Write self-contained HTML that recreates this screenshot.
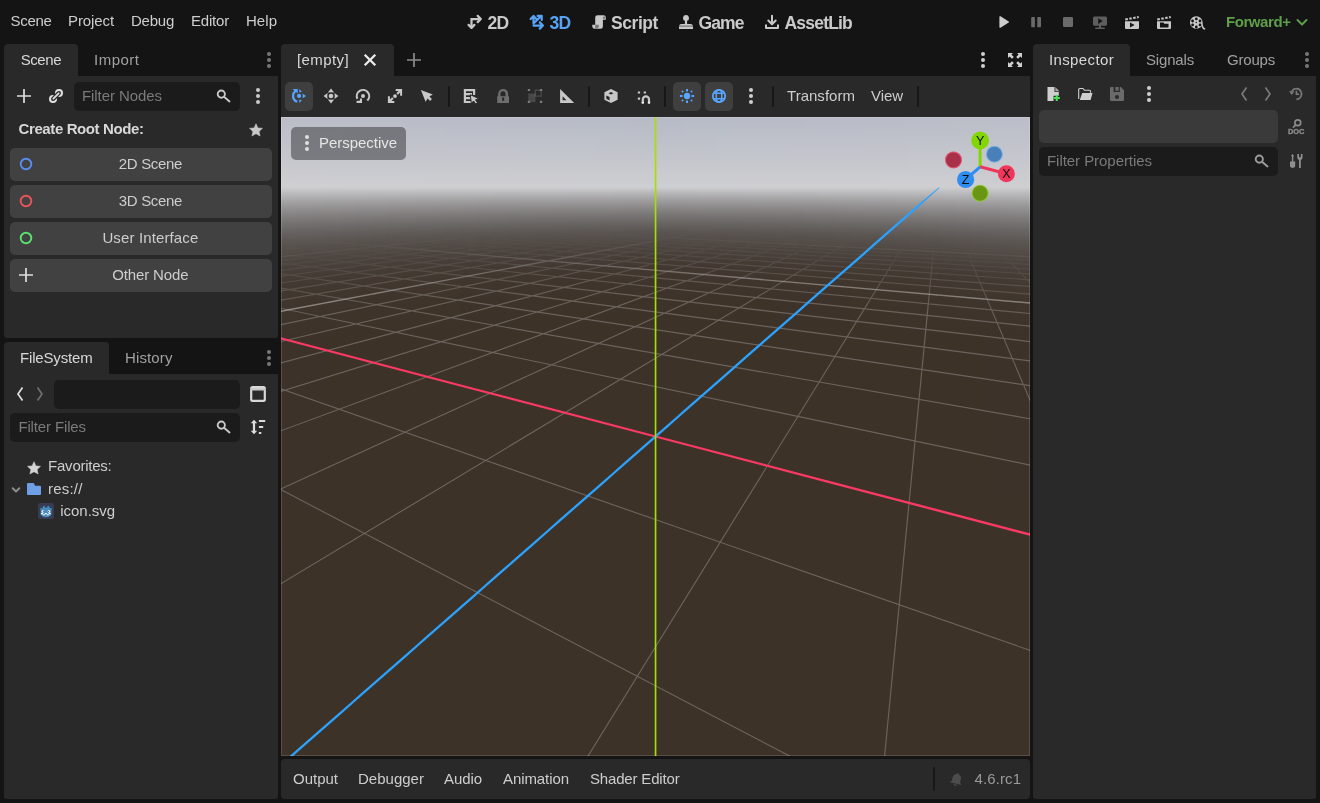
<!DOCTYPE html>
<html><head><meta charset="utf-8"><title>Godot Engine</title>
<style>
*{box-sizing:border-box;margin:0;padding:0}
html,body{width:1320px;height:803px;overflow:hidden;background:#141414}
body{position:relative;font-family:"Liberation Sans",sans-serif;font-size:15px;color:#d2d2d2}
.a{position:absolute}
.t{position:absolute;white-space:nowrap;line-height:20px;height:20px;font-size:15px;color:#cdcdcd}
.b{font-weight:bold}
.dim{color:#a0a0a0}
.ph{color:#7a7a7a}
.hl{color:#d8d8d8}
.ms{font-weight:bold;font-size:17.5px;color:#cacaca}
.ic{position:absolute;overflow:visible;color:#c8c8c8}
.panel{position:absolute;background:#292929}
.tab{position:absolute;background:#292929;border-radius:4px 4px 0 0}
.inp{position:absolute;background:#1b1b1b;border-radius:5px}
.btn{position:absolute;background:#414141;border-radius:5px}
.sep{position:absolute;width:2px;height:21px;background:#171717;border-radius:1px}
.vp{position:absolute;left:281px;top:117px;width:749px;height:639px;overflow:hidden;background:linear-gradient(to bottom,#b7bbc6 0.00%,#babdc7 1.56%,#bdc0c9 3.13%,#c0c2ca 4.69%,#c3c5cc 6.26%,#c7c8ce 7.82%,#cbccd0 9.39%,#cfcfd2 10.95%,#c8c8ca 11.27%,#bcbcbe 11.74%,#b1b0b2 12.21%,#a7a6a7 12.68%,#9d9c9d 13.15%,#949393 13.62%,#8c8a8a 14.08%,#848282 14.55%,#7d7a7a 15.02%,#777372 15.49%,#706d6b 15.96%,#6b6765 16.43%,#66615f 16.90%,#615c59 17.37%,#5d5754 17.84%,#59534f 18.31%,#554f4b 18.78%,#524b47 19.25%,#4f4843 19.72%,#4d4540 20.19%,#4b433d 20.66%,#49403a 21.13%,#473e38 21.60%,#463d36 22.07%,#41382f 23.94%,#3e342a 27.07%,#3d3228 100.00%)}
.vp3d{position:absolute;left:0;top:0}
.vpb{position:absolute;left:0;top:0;right:0;bottom:0;border:1px solid rgba(255,255,255,.14)}
.giz{position:absolute}
</style></head><body><div id="root" style="position:absolute;left:0;top:0;width:1320px;height:803px;will-change:transform">

<!-- top menu -->
<span class="t " style="letter-spacing:-0.31px;left:10.5px;top:10.7px;">Scene</span><span class="t " style="letter-spacing:-0.10px;left:68px;top:10.7px;">Project</span><span class="t " style="letter-spacing:-0.24px;left:131px;top:10.7px;">Debug</span><span class="t " style="letter-spacing:-0.20px;left:191px;top:10.7px;">Editor</span><span class="t " style="letter-spacing:0.04px;left:246px;top:10.7px;">Help</span>

<!-- main screen buttons -->
<svg class="ic" style="left:466.5px;top:14.0px;width:16px;height:16px;color:#c8c8c8;" viewBox="0 0 16 16" ><path fill="none" stroke="currentColor" stroke-width="2.250" stroke-linejoin="miter" d="M4.500 13.500V5h9"/><path fill="none" stroke="currentColor" stroke-width="2.250" stroke-linecap="round" stroke-linejoin="round" d="M10.700 1.900L13.800 5l-3.100 3.100M1.600 10.900l2.900 3 2.900-3"/></svg><span class="t ms" style="letter-spacing:-0.69px;left:487.5px;top:12.600000000000001px;">2D</span>
<svg class="ic" style="left:529.0px;top:14.0px;width:16px;height:16px;color:#57a3f5;" viewBox="0 0 16 16" ><path fill="none" stroke="currentColor" stroke-width="2.250" stroke-linecap="round" stroke-linejoin="round" d="M4.500 2.200v7.300l7.500-7.300M4.500 11.500h9.300M1.600 5l2.900-3 2.900 3M10.800 8.400l3.100 3.100-3.100 3.100M8.700 1.900h4v4"/></svg><span class="t ms" style="letter-spacing:-0.69px;left:549.5px;top:12.600000000000001px;color:#57a3f5">3D</span>
<svg class="ic" style="left:591.0px;top:14.0px;width:16px;height:16px;color:#c8c8c8;" viewBox="0 0 16 16" ><path fill="currentColor" d="M6.500 1.200a2.300 2.300 0 0 0-2.300 2.300v7.300H1.300v1.700a2.300 2.300 0 0 0 2.300 2.300h6a2.300 2.300 0 0 0 2.300-2.300V5.700h2.900V3.500a2.300 2.300 0 0 0-2.300-2.300z"/><path fill="#141414" opacity=".45" d="M4.200 10.800h3.600v1.700a1.700 1.700 0 0 1-1.700 1.700H3.600a1.700 1.700 0 0 0 .6-1.700zM11.900 3.500a1.100 1.100 0 0 1 2.200 0v1.300h-2.200z"/></svg><span class="t ms" style="letter-spacing:-0.43px;left:611px;top:12.600000000000001px;">Script</span>
<svg class="ic" style="left:678.0px;top:14.0px;width:16px;height:16px;color:#c8c8c8;" viewBox="0 0 16 16" ><path fill="currentColor" d="M8 1a3 3 0 0 0-1.100 5.800V10H3.500A2.500 2.500 0 0 0 1 12.500V15h14v-2.500A2.500 2.500 0 0 0 12.500 10H9.100V6.800A3 3 0 0 0 8 1z"/><path fill="#141414" d="M1 11.700h14v.8H1z" opacity=".7"/></svg><span class="t ms" style="letter-spacing:-0.91px;left:698.5px;top:12.600000000000001px;">Game</span>
<svg class="ic" style="left:764.0px;top:14.0px;width:16px;height:16px;color:#c8c8c8;" viewBox="0 0 16 16" ><path fill="none" stroke="currentColor" stroke-width="2" stroke-linecap="round" stroke-linejoin="round" d="M8 1.800v8M4.300 6.500L8 10.200l3.700-3.700"/><path fill="none" stroke="currentColor" stroke-width="2" stroke-linejoin="round" d="M2 10.500V14h12v-3.500"/></svg><span class="t ms" style="letter-spacing:-0.80px;left:784.5px;top:12.600000000000001px;">AssetLib</span>

<!-- run bar -->
<svg class="ic" style="left:995.5px;top:14.0px;width:16px;height:16px;color:#cdcdcd;" viewBox="0 0 16 16" ><path fill="currentColor" d="M3.400 2.900v10.200a.7.700 0 0 0 1.100.6l8.200-5.100a.7.700 0 0 0 0-1.200L4.500 2.300a.7.700 0 0 0-1.100.6z"/></svg><svg class="ic" style="left:1028.0px;top:14.0px;width:16px;height:16px;color:#6a6a6a;" viewBox="0 0 16 16" ><rect x="3.200" y="2.900" width="3.700" height="10.400" rx=".9" fill="currentColor"/><rect x="9.300" y="2.900" width="3.700" height="10.400" rx=".9" fill="currentColor"/></svg><svg class="ic" style="left:1060.0px;top:14.0px;width:16px;height:16px;color:#6a6a6a;" viewBox="0 0 16 16" ><rect x="3" y="3" width="10" height="10" rx="1.300" fill="currentColor"/></svg>
<svg class="ic" style="left:1092.0px;top:14.5px;width:16px;height:16px;color:#5e5e5e;" viewBox="0 0 16 16" ><path fill="currentColor" fill-rule="evenodd" d="M2.500 1.400a1.500 1.500 0 0 0-1.500 1.500v6.400a1.500 1.500 0 0 0 1.500 1.500h4.500v1.600H3.200v1.700h9.600v-1.700H9v-1.600h4.500a1.500 1.500 0 0 0 1.500-1.500V2.900a1.500 1.500 0 0 0-1.500-1.500zM6.200 3.300l4.600 2.800-4.600 2.800z"/></svg><svg class="ic" style="left:1124.0px;top:14.3px;width:16px;height:16px;color:#c8c8c8;" viewBox="0 0 16 16" ><path fill="currentColor" d="M1 4.400L14.500 1.900l.5 2.200L1.500 6.600z"/><path fill="#141414" d="M3.500 3.600l1.500-.300.600 2.600-1.500.300zM7.400 2.900l1.500-.300.600 2.600-1.500.300zM11.300 2.200l1.500-.300.600 2.600-1.500.300z"/><path fill="currentColor" fill-rule="evenodd" d="M1 7.200h14v6.800a1 1 0 0 1-1 1H2a1 1 0 0 1-1-1zm5 1.300v5l4.600-2.500z"/></svg><svg class="ic" style="left:1156.0px;top:14.3px;width:16px;height:16px;color:#c8c8c8;" viewBox="0 0 16 16" ><path fill="currentColor" d="M1 4.400L14.500 1.900l.5 2.200L1.500 6.600z"/><path fill="#141414" d="M3.500 3.600l1.500-.300.600 2.600-1.500.300zM7.400 2.900l1.500-.300.600 2.600-1.500.300zM11.300 2.200l1.500-.300.600 2.600-1.500.300z"/><path fill="currentColor" fill-rule="evenodd" d="M1 7.200h14v6.800a1 1 0 0 1-1 1H2a1 1 0 0 1-1-1zm3 1.400v4.900h8.500V9.800H8.400l-1-1.200z"/></svg><svg class="ic" style="left:1189.0px;top:14.6px;width:16px;height:16px;color:#c8c8c8;" viewBox="0 0 16 16" ><path fill="currentColor" fill-rule="evenodd" d="M7.300 1.200a6.300 6.300 0 1 0 5.300 9.700c.3 1.500.9 2.700 2 3.300a.9.900 0 1 0 .6-1.300c-1-.9-1.500-2.800-1.600-5.400A6.300 6.300 0 0 0 7.300 1.200zm0 1.300a1.400 1.400 0 1 1 0 2.800 1.400 1.400 0 0 1 0-2.800zM3.600 4.600a1.400 1.400 0 1 1 0 2.800 1.400 1.400 0 0 1 0-2.800zm7.400 0a1.400 1.400 0 1 1 0 2.800 1.400 1.400 0 0 1 0-2.800zM7.300 6.700a.8.800 0 1 1 0 1.600.8.800 0 0 1 0-1.600zM3.600 8.500a1.400 1.400 0 1 1 0 2.800 1.400 1.400 0 0 1 0-2.800zm7.400 0a1.400 1.400 0 1 1 0 2.800 1.400 1.400 0 0 1 0-2.800zM7.300 10.600a1.400 1.400 0 1 1 0 2.800 1.400 1.400 0 0 1 0-2.800z"/></svg>
<span class="t b" style="letter-spacing:-0.43px;left:1226px;top:11.8px;font-size:15px;color:#5f9f4a">Forward+</span>
<svg class="ic" style="left:1294.0px;top:14.0px;width:16px;height:16px;color:#5f9f4a;" viewBox="0 0 16 16" ><path fill="none" stroke="currentColor" stroke-width="2" stroke-linecap="round" stroke-linejoin="round" d="M3.500 6l4.500 4.500L12.500 6"/></svg>

<!-- Scene dock -->
<div class="tab" style="left:4px;top:44px;width:74px;height:33px"></div>
<div class="panel" style="left:4px;top:76px;width:274px;height:262px;border-radius:0 0 3px 3px"></div>
<span class="t hl" style="letter-spacing:-0.41px;left:20.7px;top:49.6px;">Scene</span><span class="t dim" style="letter-spacing:0.50px;left:94px;top:49.6px;">Import</span>
<svg class="ic" style="left:260.9px;top:52.0px;width:16px;height:16px;color:#787878;" viewBox="0 0 16 16" ><circle cx="8" cy="2" r="2.05" fill="currentColor"/><circle cx="8" cy="8" r="2.05" fill="currentColor"/><circle cx="8" cy="14" r="2.05" fill="currentColor"/></svg>
<svg class="ic" style="left:16.0px;top:88.0px;width:16px;height:16px;color:#e0e0e0;" viewBox="0 0 16 16" ><path fill="currentColor" d="M7.150 1v6.150H1v1.700h6.150V15h1.700V8.850H15v-1.700H8.850V1z"/></svg><svg class="ic" style="left:48.0px;top:88.0px;width:16px;height:16px;color:#e0e0e0;" viewBox="0 0 16 16" ><g fill="none" stroke="currentColor" stroke-width="2"><circle cx="11" cy="5" r="3"/><circle cx="5" cy="11" r="3"/></g><path fill="none" stroke="#292929" stroke-width="4.300" stroke-linecap="round" d="M5.800 10.200L10.200 5.800"/><path fill="none" stroke="currentColor" stroke-width="1.900" stroke-linecap="round" d="M5.300 10.700L10.700 5.300"/></svg>
<div class="inp" style="left:74px;top:82px;width:166px;height:29px"></div>
<span class="t ph" style="letter-spacing:-0.07px;left:82px;top:86px;">Filter Nodes</span><svg class="ic" style="left:216.0px;top:88.0px;width:16px;height:16px;color:#c8c8c8;" viewBox="0 0 16 16" ><circle cx="5.300" cy="6.100" r="3.600" fill="none" stroke="currentColor" stroke-width="1.900"/><path fill="none" stroke="currentColor" stroke-width="1.900" stroke-linecap="round" d="M8.300 9l5.200 4.500"/></svg>
<svg class="ic" style="left:250.0px;top:88.0px;width:16px;height:16px;color:#cacaca;" viewBox="0 0 16 16" ><circle cx="8" cy="2" r="2.05" fill="currentColor"/><circle cx="8" cy="8" r="2.05" fill="currentColor"/><circle cx="8" cy="14" r="2.05" fill="currentColor"/></svg>
<span class="t b hl" style="letter-spacing:-0.39px;left:18.5px;top:118.80000000000001px;">Create Root Node:</span><svg class="ic" style="left:248.0px;top:121.6px;width:16px;height:16px;color:#c8c8c8;" viewBox="0 0 16 16" ><path fill="currentColor" stroke="currentColor" stroke-width=".5" stroke-linejoin="round" d="M8 1.700l1.900 4.200 4.600.4-3.400 3.200 1 4.500L8 11.700l-4.100 2.300 1-4.500L1.500 6.300l4.600-.4z"/></svg>
<div class="btn" style="left:10px;top:148px;width:262px;height:33px"></div>
<div class="btn" style="left:10px;top:185px;width:262px;height:33px"></div>
<div class="btn" style="left:10px;top:222px;width:262px;height:33px"></div>
<div class="btn" style="left:10px;top:259px;width:262px;height:33px"></div>
<svg class="ic" style="left:18.0px;top:156.3px;width:16px;height:16px;color:#5b8cf0;" viewBox="0 0 16 16" ><circle cx="8" cy="8" r="5.300" fill="none" stroke="currentColor" stroke-width="1.900"/></svg><svg class="ic" style="left:18.0px;top:193.2px;width:16px;height:16px;color:#e8545a;" viewBox="0 0 16 16" ><circle cx="8" cy="8" r="5.300" fill="none" stroke="currentColor" stroke-width="1.900"/></svg><svg class="ic" style="left:18.0px;top:230.2px;width:16px;height:16px;color:#5ae070;" viewBox="0 0 16 16" ><circle cx="8" cy="8" r="5.300" fill="none" stroke="currentColor" stroke-width="1.900"/></svg><svg class="ic" style="left:18.2px;top:267.0px;width:16px;height:16px;color:#e0e0e0;" viewBox="0 0 16 16" ><path fill="currentColor" d="M7.150 1v6.150H1v1.700h6.150V15h1.700V8.850H15v-1.700H8.850V1z"/></svg>
<span class="t " style="letter-spacing:-0.30px;left:118.7px;top:154.3px;">2D Scene</span><span class="t " style="letter-spacing:-0.30px;left:118.7px;top:191.2px;">3D Scene</span><span class="t " style="letter-spacing:0.13px;left:102.4px;top:228.2px;">User Interface</span><span class="t " style="letter-spacing:-0.15px;left:112.3px;top:265.1px;">Other Node</span>

<!-- FileSystem dock -->
<div class="tab" style="left:4px;top:342px;width:105px;height:33px"></div>
<div class="panel" style="left:4px;top:374px;width:274px;height:425px;border-radius:0 0 3px 3px"></div>
<span class="t hl" style="letter-spacing:-0.17px;left:20px;top:347.6px;">FileSystem</span><span class="t dim" style="letter-spacing:0.12px;left:125px;top:347.6px;">History</span>
<svg class="ic" style="left:260.9px;top:350.0px;width:16px;height:16px;color:#787878;" viewBox="0 0 16 16" ><circle cx="8" cy="2" r="2.05" fill="currentColor"/><circle cx="8" cy="8" r="2.05" fill="currentColor"/><circle cx="8" cy="14" r="2.05" fill="currentColor"/></svg>
<svg class="ic" style="left:12.0px;top:386.0px;width:16px;height:16px;color:#e0e0e0;" viewBox="0 0 16 16" ><path fill="none" stroke="currentColor" stroke-width="1.700" d="M10.500 1.500L6 8l4.500 6.500"/></svg><svg class="ic" style="left:32.0px;top:386.0px;width:16px;height:16px;color:#707070;" viewBox="0 0 16 16" ><path fill="none" stroke="currentColor" stroke-width="1.700" d="M5.500 1.500L10 8l-4.500 6.500"/></svg>
<div class="inp" style="left:54px;top:380px;width:186px;height:29px"></div>
<svg class="ic" style="left:250.1px;top:386.0px;width:16px;height:16px;color:#d8d8d8;" viewBox="0 0 16 16" ><path fill="currentColor" fill-rule="evenodd" d="M2.600 .1A2.500 2.500 0 0 0 .1 2.600v10.800a2.500 2.500 0 0 0 2.500 2.500h10.800a2.500 2.500 0 0 0 2.500-2.500V2.600A2.500 2.500 0 0 0 13.400 .1zM2.300 4.400h11.400v9.300H2.300z"/><path fill="#292929" opacity=".1" d="M.1 2.600h15.800v1.800H.1z"/></svg>
<div class="inp" style="left:10px;top:413px;width:230px;height:29px"></div>
<span class="t ph" style="letter-spacing:-0.14px;left:18.4px;top:416.6px;">Filter Files</span><svg class="ic" style="left:216.0px;top:419.0px;width:16px;height:16px;color:#c8c8c8;" viewBox="0 0 16 16" ><circle cx="5.300" cy="6.100" r="3.600" fill="none" stroke="currentColor" stroke-width="1.900"/><path fill="none" stroke="currentColor" stroke-width="1.900" stroke-linecap="round" d="M8.300 9l5.200 4.500"/></svg><svg class="ic" style="left:250.0px;top:419.0px;width:16px;height:16px;color:#dcdcdc;" viewBox="0 0 16 16" ><path fill="currentColor" d="M4 .7L.8 4.300h2.100v7.400H.8L4 15.300l3.200-3.600H5.100V4.300h2.100zM8.900 1h6.300v2.100H8.900zM8.900 7h4.300v2.100H8.900zM8.900 13h2.400v2.100H8.900z"/></svg>
<svg class="ic" style="left:26.0px;top:459.6px;width:16px;height:16px;color:#d4d4d4;" viewBox="0 0 16 16" ><path fill="currentColor" stroke="currentColor" stroke-width=".5" stroke-linejoin="round" d="M8 1.700l1.900 4.200 4.600.4-3.400 3.200 1 4.500L8 11.700l-4.100 2.300 1-4.500L1.500 6.300l4.600-.4z"/></svg><span class="t " style="letter-spacing:-0.24px;left:48.1px;top:456.4px;">Favorites:</span>
<svg class="ic" style="left:8.0px;top:481.5px;width:16px;height:16px;color:#8c8c8c;" viewBox="0 0 16 16" ><path fill="none" stroke="currentColor" stroke-width="2" stroke-linecap="round" stroke-linejoin="round" d="M4.700 6.200L8 9.500l3.300-3.300"/></svg><svg class="ic" style="left:26.0px;top:481.0px;width:16px;height:16px;color:#6e9ee4;" viewBox="0 0 16 16" ><path fill="currentColor" d="M2 2a1 1 0 0 0-1 1v10a1 1 0 0 0 1 1h12a1 1 0 0 0 1-1V5.700a1 1 0 0 0-1-1H9L8.200 2.700A1 1 0 0 0 7.300 2z"/></svg><span class="t " style="letter-spacing:0.19px;left:48.1px;top:478.8px;">res://</span>
<svg class="ic" style="left:38.0px;top:503.0px;width:16px;height:16px;" viewBox="0 0 16 16" ><rect x="0" y="0" width="16" height="16" rx="2.600" fill="#363d52"/><path fill="#478cbf" d="M1.900 5.500l.7 1.500v4.500l1.400 1.500 2 1 2 .2 2-.2 2-1 1.400-1.500V7l.7-1.500-1.300-.6-.9.900-.5-2.300-1.600-.8-.6 1.800H7l-.6-1.800-1.600.8-.5 2.300-.9-.9z"/><circle cx="4.800" cy="8.400" r="1.250" fill="#fff"/><circle cx="10.900" cy="8.400" r="1.250" fill="#fff"/><circle cx="5.300" cy="8.500" r=".6" fill="#414042"/><circle cx="10.400" cy="8.500" r=".6" fill="#414042"/><path fill="#fff" d="M2.900 10.100h1.900v1.100H2.900zM6.800 10.100h2v1.100h-2zM10.800 10.100h1.900v1.100h-1.900zM4.800 11.200h2v1.100h-2zM8.800 11.200h2v1.100h-2z"/></svg><span class="t " style="letter-spacing:-0.00px;left:60.2px;top:501.1px;">icon.svg</span>

<!-- center -->
<div class="tab" style="left:281px;top:44px;width:113px;height:33px"></div>
<div class="panel" style="left:281px;top:76px;width:749px;height:42px"></div>
<span class="t hl" style="letter-spacing:0.40px;left:297px;top:49.6px;">[empty]</span><svg class="ic" style="left:362.0px;top:52.0px;width:16px;height:16px;color:#ececec;" viewBox="0 0 16 16" ><path fill="none" stroke="currentColor" stroke-width="2.300" d="M2.700 2.700l10.600 10.600M13.300 2.700L2.700 13.300"/></svg><svg class="ic" style="left:406.0px;top:52.0px;width:16px;height:16px;color:#8c8c8c;" viewBox="0 0 16 16" ><path fill="currentColor" d="M7.150 1v6.150H1v1.700h6.150V15h1.700V8.850H15v-1.700H8.850V1z"/></svg>
<svg class="ic" style="left:975.0px;top:52.2px;width:16px;height:16px;color:#d0d0d0;" viewBox="0 0 16 16" ><circle cx="8" cy="2" r="2.05" fill="currentColor"/><circle cx="8" cy="8" r="2.05" fill="currentColor"/><circle cx="8" cy="14" r="2.05" fill="currentColor"/></svg><svg class="ic" style="left:1007.0px;top:52.0px;width:16px;height:16px;color:#d0d0d0;" viewBox="0 0 16 16" ><path fill="currentColor" d="M1 1h5L4.400 2.600l2.400 2.400-1.800 1.800-2.400-2.400L1 6zM15 1v5l-1.600-1.600-2.400 2.400-1.800-1.800 2.400-2.400L10 1zM1 15v-5l1.600 1.600 2.400-2.400 1.800 1.800-2.400 2.400L6 15zM15 15h-5l1.600-1.600-2.400-2.400 1.800-1.800 2.400 2.400L15 10z"/></svg>

<div class="btn" style="left:285px;top:82px;width:28px;height:29px;background:#3f3f3f"></div>
<svg class="ic" style="left:291.0px;top:88.0px;width:16px;height:16px;" viewBox="0 0 16 16" ><g fill="#57a5ff"><circle cx="8.100" cy="7.900" r="2.100"/><path d="M11.700 5.700L15.100 8l-3.400 2.300zM8.300 .9L11 4.100 8.300 4.300zM8.300 15.100L11 11.900 8.300 11.700z"/><path d="M1.700 1h5v4.600L5.300 4.200l-.2.200z"/></g><path fill="none" stroke="#57a5ff" stroke-width="2.200" d="M5.600 2.600A6 6 0 0 0 6.300 13.800"/></svg><svg class="ic" style="left:323.0px;top:88.0px;width:16px;height:16px;" viewBox="0 0 16 16" ><path fill="currentColor" d="M8 .6l3.100 3.900H4.900zM8 15.400l3.100-3.900H4.900zM.6 8l3.900-3.100v6.200zM15.400 8l-3.900-3.100v6.200z"/><circle cx="8" cy="8" r="3.500" fill="#292929"/><circle cx="8" cy="8" r="2.300" fill="currentColor"/></svg><svg class="ic" style="left:355.0px;top:88.0px;width:16px;height:16px;" viewBox="0 0 16 16" ><path fill="none" stroke="currentColor" stroke-width="2.100" d="M12.300 12.600A6.200 6.200 0 1 0 2.400 10.800"/><path fill="currentColor" d="M1.600 14.900h5.400v-4.500H4.900v2.400H1.600z"/><circle cx="8" cy="8.100" r="2" fill="currentColor"/></svg><svg class="ic" style="left:387.0px;top:88.0px;width:16px;height:16px;" viewBox="0 0 16 16" ><path fill="currentColor" d="M8.700 1.100h6.400v6.700h-2V4.600l-2.200 2.200-1.500-1.500 2.100-2.200H8.700zM7.300 14.900H.9V8.200h2v3.200l2.200-2.200 1.500 1.500-2.100 2.200h2.800z"/><circle cx="8" cy="8.100" r="1.900" fill="currentColor"/></svg><svg class="ic" style="left:419.0px;top:88.0px;width:16px;height:16px;" viewBox="0 0 16 16" ><path fill="currentColor" d="M1.900 2.100l11.900 4.500-3.400 2 2.500 2.500-1.800 1.800-2.500-2.500-2 3.400z"/></svg>
<div class="sep" style="left:448px;top:86px"></div>
<svg class="ic" style="left:463.0px;top:88.0px;width:16px;height:16px;" viewBox="0 0 16 16" ><path fill="currentColor" d="M.8 1h11.400v6H10V3.200H3v1.900h6v2.200H3v1.800h5v2.200H3V13h6v2.100H.8z"/><path fill="currentColor" stroke="#292929" stroke-width="1" d="M7.300 6.700l8.400 3.800-3.200 1.300 2 2.900-1.900 1.300-2-3-2.300 2.300z"/></svg><svg class="ic" style="left:495.0px;top:88.0px;width:16px;height:16px;color:#6e6e6e;" viewBox="0 0 16 16" ><path fill="currentColor" fill-rule="evenodd" d="M8 1a4.900 4.900 0 0 0-4.900 4.900v2.400H2.200v6.600h11.800V8.300h-.9V5.900A4.900 4.900 0 0 0 8 1zm0 2.300a2.600 2.600 0 0 1 2.600 2.600v2.400H5.400V5.900A2.600 2.600 0 0 1 8 3.300zM7.100 9.600h2.100v3.200H7.100z"/></svg><svg class="ic" style="left:527.0px;top:88.0px;width:16px;height:16px;color:#7c7c7c;" viewBox="0 0 16 16" ><path fill="currentColor" d="M.8 1h2.300v2.100H.8zM12.900 1h2.300v2.100h-2.300zM.8 12.800h2.300v2.100H.8zM12.900 12.800h2.300v2.100h-2.300z"/><path fill="currentColor" opacity=".38" d="M1.300 5.500h7.200v8.700H1.300z"/><path fill="none" stroke="currentColor" opacity=".38" stroke-width="1.400" d="M8.300 2.200h5.900v5.900H8.300z"/></svg><svg class="ic" style="left:559.0px;top:88.0px;width:16px;height:16px;" viewBox="0 0 16 16" ><path fill="currentColor" fill-rule="evenodd" d="M1.100 1v14.100h14.100zM3.600 8.300l3.900 3.900H3.600z"/></svg>
<div class="sep" style="left:588px;top:86px"></div>
<svg class="ic" style="left:603.0px;top:87.6px;width:16px;height:16px;" viewBox="0 0 16 16" ><path fill="currentColor" d="M8 .9L1.400 4.300v7.400L8 15.100l6.600-3.400V4.300z"/><path fill="#292929" d="M3.300 7.400l3.300 1.600v3.400l-3.300-1.600zM8 3.900l2.500 1.300L8 6.500 5.500 5.200z"/></svg><svg class="ic" style="left:636.0px;top:87.5px;width:16px;height:16px;" viewBox="0 0 16 16" ><path fill="currentColor" d="M1.800 3.400h2.300v2.200H1.800zM7.700 3.400H10v2.200H7.700zM1.800 9.500h2.300v2.200H1.800z"/><path fill="none" stroke="currentColor" stroke-width="2.200" d="M6.800 15.400v-4a3.100 3.100 0 0 1 6.200 0v4"/><path fill="#f4f4f4" d="M5.700 13.700h2.200v1.700H5.700zM11.900 13.700h2.200v1.700h-2.200z"/></svg>
<div class="sep" style="left:664px;top:86px"></div>
<div class="btn" style="left:673px;top:82px;width:28px;height:29px;background:#3f3f3f"></div>
<div class="btn" style="left:705px;top:82px;width:28px;height:29px;background:#3f3f3f"></div>
<svg class="ic" style="left:678.8px;top:88.0px;width:16px;height:16px;color:#57a5ff;" viewBox="0 0 16 16" ><circle cx="8" cy="8" r="3.200" fill="currentColor"/><path fill="currentColor" d="M7 .9h2v2.600H7zM7 12.500h2v2.600H7zM.9 7h2.600v2H.9zM12.500 7h2.600v2h-2.600zM3.500 2.300l1.200 1.200-1.200 1.200-1.200-1.200zM12.500 2.300l1.200 1.200-1.200 1.200-1.200-1.200zM3.500 11.300l1.200 1.200-1.200 1.200-1.200-1.200zM12.500 11.300l1.200 1.200-1.200 1.200-1.200-1.200z"/></svg><svg class="ic" style="left:711.0px;top:88.0px;width:16px;height:16px;color:#57a5ff;" viewBox="0 0 16 16" ><circle cx="8" cy="8" r="6.200" fill="none" stroke="currentColor" stroke-width="1.800"/><ellipse cx="8" cy="8" rx="2.800" ry="6.200" fill="none" stroke="currentColor" stroke-width="1.500"/><path fill="none" stroke="currentColor" stroke-width="1.500" d="M2.600 5.200h10.800M2.600 10.800h10.800"/></svg><svg class="ic" style="left:743.0px;top:88.0px;width:16px;height:16px;color:#d0d0d0;" viewBox="0 0 16 16" ><circle cx="8" cy="2" r="2.05" fill="currentColor"/><circle cx="8" cy="8" r="2.05" fill="currentColor"/><circle cx="8" cy="14" r="2.05" fill="currentColor"/></svg>
<div class="sep" style="left:772px;top:86px"></div>
<span class="t " style="letter-spacing:0.02px;left:787px;top:86px;">Transform</span><span class="t " style="letter-spacing:-0.06px;left:871px;top:86px;">View</span>
<div class="sep" style="left:917px;top:86px"></div>

<div class="vp"><svg class="vp3d" width="749" height="639" viewBox="0 0 749 639">
<defs><linearGradient id="sk0" x1="0" y1="0" x2="0" y2="1"><stop offset="0.0000" stop-color="#bbbec8"/><stop offset="0.0235" stop-color="#bec1ca"/><stop offset="0.0469" stop-color="#c2c4cc"/><stop offset="0.0704" stop-color="#c7c8ce"/><stop offset="0.0892" stop-color="#cbcbd0"/><stop offset="0.1017" stop-color="#cdced1"/><stop offset="0.1080" stop-color="#cfcfd2"/><stop offset="0.1111" stop-color="#cccccf"/><stop offset="0.1142" stop-color="#c6c6c8"/><stop offset="0.1189" stop-color="#bcbcbe"/><stop offset="0.1252" stop-color="#b1b0b2"/><stop offset="0.1315" stop-color="#a5a4a6"/><stop offset="0.1377" stop-color="#9b9a9b"/><stop offset="0.1440" stop-color="#929090"/><stop offset="0.1502" stop-color="#898787"/><stop offset="0.1565" stop-color="#817e7e"/><stop offset="0.1628" stop-color="#797675"/><stop offset="0.1690" stop-color="#736f6e"/><stop offset="0.1753" stop-color="#6c6867"/><stop offset="0.1815" stop-color="#676260"/><stop offset="0.1878" stop-color="#625d5a"/><stop offset="0.1941" stop-color="#5d5754"/><stop offset="0.2003" stop-color="#59534f"/><stop offset="0.2066" stop-color="#554f4b"/><stop offset="0.2144" stop-color="#514a45"/><stop offset="0.2238" stop-color="#4d4540"/><stop offset="0.2363" stop-color="#48403a"/><stop offset="0.2551" stop-color="#443b33"/><stop offset="0.2864" stop-color="#40362d"/><stop offset="0.3490" stop-color="#3d3229"/><stop offset="1.0000" stop-color="#3d3228"/></linearGradient><linearGradient id="sk1" x1="0" y1="0" x2="0" y2="1"><stop offset="0.0000" stop-color="#babec8"/><stop offset="0.0235" stop-color="#bec1ca"/><stop offset="0.0469" stop-color="#c2c4cc"/><stop offset="0.0704" stop-color="#c7c8ce"/><stop offset="0.0892" stop-color="#cbcbd0"/><stop offset="0.1017" stop-color="#cdcdd1"/><stop offset="0.1080" stop-color="#cfcfd2"/><stop offset="0.1111" stop-color="#cccccf"/><stop offset="0.1142" stop-color="#c6c5c8"/><stop offset="0.1189" stop-color="#bcbcbe"/><stop offset="0.1252" stop-color="#b0afb1"/><stop offset="0.1315" stop-color="#a5a4a5"/><stop offset="0.1377" stop-color="#9b999a"/><stop offset="0.1440" stop-color="#918f90"/><stop offset="0.1502" stop-color="#888686"/><stop offset="0.1565" stop-color="#807d7d"/><stop offset="0.1628" stop-color="#797574"/><stop offset="0.1690" stop-color="#726e6d"/><stop offset="0.1753" stop-color="#6b6766"/><stop offset="0.1815" stop-color="#66615f"/><stop offset="0.1878" stop-color="#615c59"/><stop offset="0.1941" stop-color="#5c5753"/><stop offset="0.2003" stop-color="#58524e"/><stop offset="0.2066" stop-color="#544e4a"/><stop offset="0.2144" stop-color="#504944"/><stop offset="0.2238" stop-color="#4c453f"/><stop offset="0.2363" stop-color="#484039"/><stop offset="0.2551" stop-color="#433a33"/><stop offset="0.2864" stop-color="#40352c"/><stop offset="0.3490" stop-color="#3d3229"/><stop offset="1.0000" stop-color="#3d3228"/></linearGradient><linearGradient id="sk2" x1="0" y1="0" x2="0" y2="1"><stop offset="0.0000" stop-color="#babdc8"/><stop offset="0.0235" stop-color="#bec1c9"/><stop offset="0.0469" stop-color="#c2c4cc"/><stop offset="0.0704" stop-color="#c7c8ce"/><stop offset="0.0892" stop-color="#cbcbd0"/><stop offset="0.1017" stop-color="#cdcdd1"/><stop offset="0.1080" stop-color="#cfcfd2"/><stop offset="0.1111" stop-color="#cccccf"/><stop offset="0.1142" stop-color="#c6c5c8"/><stop offset="0.1189" stop-color="#bcbbbe"/><stop offset="0.1252" stop-color="#b0afb1"/><stop offset="0.1315" stop-color="#a4a3a5"/><stop offset="0.1377" stop-color="#9a9899"/><stop offset="0.1440" stop-color="#908e8f"/><stop offset="0.1502" stop-color="#878585"/><stop offset="0.1565" stop-color="#7f7c7c"/><stop offset="0.1628" stop-color="#787474"/><stop offset="0.1690" stop-color="#716d6c"/><stop offset="0.1753" stop-color="#6b6665"/><stop offset="0.1815" stop-color="#65605e"/><stop offset="0.1878" stop-color="#605b58"/><stop offset="0.1941" stop-color="#5b5652"/><stop offset="0.2003" stop-color="#57514d"/><stop offset="0.2066" stop-color="#544d49"/><stop offset="0.2144" stop-color="#504844"/><stop offset="0.2238" stop-color="#4c443e"/><stop offset="0.2363" stop-color="#473f38"/><stop offset="0.2551" stop-color="#433a32"/><stop offset="0.2864" stop-color="#3f352c"/><stop offset="0.3490" stop-color="#3d3229"/><stop offset="1.0000" stop-color="#3d3228"/></linearGradient><linearGradient id="sk3" x1="0" y1="0" x2="0" y2="1"><stop offset="0.0000" stop-color="#babdc7"/><stop offset="0.0235" stop-color="#bec1c9"/><stop offset="0.0469" stop-color="#c2c4cb"/><stop offset="0.0704" stop-color="#c7c8ce"/><stop offset="0.0892" stop-color="#cacbd0"/><stop offset="0.1017" stop-color="#cdcdd1"/><stop offset="0.1080" stop-color="#cfcfd2"/><stop offset="0.1111" stop-color="#cccccf"/><stop offset="0.1142" stop-color="#c5c5c8"/><stop offset="0.1189" stop-color="#bcbbbd"/><stop offset="0.1252" stop-color="#afaeb0"/><stop offset="0.1315" stop-color="#a4a3a4"/><stop offset="0.1377" stop-color="#999899"/><stop offset="0.1440" stop-color="#908e8e"/><stop offset="0.1502" stop-color="#878484"/><stop offset="0.1565" stop-color="#7f7c7b"/><stop offset="0.1628" stop-color="#777473"/><stop offset="0.1690" stop-color="#706c6b"/><stop offset="0.1753" stop-color="#6a6664"/><stop offset="0.1815" stop-color="#645f5d"/><stop offset="0.1878" stop-color="#5f5a57"/><stop offset="0.1941" stop-color="#5a5551"/><stop offset="0.2003" stop-color="#56504c"/><stop offset="0.2066" stop-color="#534c48"/><stop offset="0.2144" stop-color="#4f4843"/><stop offset="0.2238" stop-color="#4b433d"/><stop offset="0.2363" stop-color="#473e38"/><stop offset="0.2551" stop-color="#433932"/><stop offset="0.2864" stop-color="#3f352c"/><stop offset="0.3490" stop-color="#3d3228"/><stop offset="1.0000" stop-color="#3d3228"/></linearGradient><linearGradient id="sk4" x1="0" y1="0" x2="0" y2="1"><stop offset="0.0000" stop-color="#babdc7"/><stop offset="0.0235" stop-color="#bec0c9"/><stop offset="0.0469" stop-color="#c2c4cb"/><stop offset="0.0704" stop-color="#c6c8ce"/><stop offset="0.0892" stop-color="#cacbd0"/><stop offset="0.1017" stop-color="#cdcdd1"/><stop offset="0.1080" stop-color="#cfcfd2"/><stop offset="0.1111" stop-color="#cccccf"/><stop offset="0.1142" stop-color="#c5c5c8"/><stop offset="0.1189" stop-color="#bbbbbd"/><stop offset="0.1252" stop-color="#afaeb0"/><stop offset="0.1315" stop-color="#a4a2a4"/><stop offset="0.1377" stop-color="#999798"/><stop offset="0.1440" stop-color="#8f8d8d"/><stop offset="0.1502" stop-color="#868383"/><stop offset="0.1565" stop-color="#7e7b7a"/><stop offset="0.1628" stop-color="#767372"/><stop offset="0.1690" stop-color="#6f6b6a"/><stop offset="0.1753" stop-color="#696563"/><stop offset="0.1815" stop-color="#635e5c"/><stop offset="0.1878" stop-color="#5e5956"/><stop offset="0.1941" stop-color="#5a5450"/><stop offset="0.2003" stop-color="#564f4b"/><stop offset="0.2066" stop-color="#524b47"/><stop offset="0.2144" stop-color="#4e4742"/><stop offset="0.2238" stop-color="#4a423d"/><stop offset="0.2363" stop-color="#463e37"/><stop offset="0.2551" stop-color="#423931"/><stop offset="0.2864" stop-color="#3f352c"/><stop offset="0.3490" stop-color="#3d3228"/><stop offset="1.0000" stop-color="#3d3228"/></linearGradient><linearGradient id="sk5" x1="0" y1="0" x2="0" y2="1"><stop offset="0.0000" stop-color="#b9bdc7"/><stop offset="0.0235" stop-color="#bdc0c9"/><stop offset="0.0469" stop-color="#c2c4cb"/><stop offset="0.0704" stop-color="#c6c8ce"/><stop offset="0.0892" stop-color="#cacbd0"/><stop offset="0.1017" stop-color="#cdcdd1"/><stop offset="0.1080" stop-color="#cfcfd2"/><stop offset="0.1111" stop-color="#cccccf"/><stop offset="0.1142" stop-color="#c5c5c8"/><stop offset="0.1189" stop-color="#bbbbbd"/><stop offset="0.1252" stop-color="#afaeb0"/><stop offset="0.1315" stop-color="#a3a2a3"/><stop offset="0.1377" stop-color="#989797"/><stop offset="0.1440" stop-color="#8e8c8d"/><stop offset="0.1502" stop-color="#858383"/><stop offset="0.1565" stop-color="#7d7a79"/><stop offset="0.1628" stop-color="#757271"/><stop offset="0.1690" stop-color="#6e6a69"/><stop offset="0.1753" stop-color="#686462"/><stop offset="0.1815" stop-color="#635e5b"/><stop offset="0.1878" stop-color="#5d5855"/><stop offset="0.1941" stop-color="#59534f"/><stop offset="0.2003" stop-color="#554f4a"/><stop offset="0.2066" stop-color="#514b46"/><stop offset="0.2144" stop-color="#4e4641"/><stop offset="0.2238" stop-color="#4a423c"/><stop offset="0.2363" stop-color="#463d36"/><stop offset="0.2551" stop-color="#423831"/><stop offset="0.2864" stop-color="#3f342b"/><stop offset="0.3490" stop-color="#3d3228"/><stop offset="1.0000" stop-color="#3d3228"/></linearGradient><linearGradient id="sk6" x1="0" y1="0" x2="0" y2="1"><stop offset="0.0000" stop-color="#b9bdc7"/><stop offset="0.0235" stop-color="#bdc0c9"/><stop offset="0.0469" stop-color="#c2c4cb"/><stop offset="0.0704" stop-color="#c6c8ce"/><stop offset="0.0892" stop-color="#cacbd0"/><stop offset="0.1017" stop-color="#cdcdd1"/><stop offset="0.1080" stop-color="#cfcfd2"/><stop offset="0.1111" stop-color="#cccccf"/><stop offset="0.1142" stop-color="#c5c5c7"/><stop offset="0.1189" stop-color="#bbbabd"/><stop offset="0.1252" stop-color="#aeadaf"/><stop offset="0.1315" stop-color="#a3a1a3"/><stop offset="0.1377" stop-color="#989697"/><stop offset="0.1440" stop-color="#8e8c8c"/><stop offset="0.1502" stop-color="#858282"/><stop offset="0.1565" stop-color="#7c7979"/><stop offset="0.1628" stop-color="#757170"/><stop offset="0.1690" stop-color="#6e6a68"/><stop offset="0.1753" stop-color="#676361"/><stop offset="0.1815" stop-color="#625d5a"/><stop offset="0.1878" stop-color="#5d5754"/><stop offset="0.1941" stop-color="#58524f"/><stop offset="0.2003" stop-color="#544e4a"/><stop offset="0.2066" stop-color="#514a45"/><stop offset="0.2144" stop-color="#4d4640"/><stop offset="0.2238" stop-color="#49413b"/><stop offset="0.2363" stop-color="#463d36"/><stop offset="0.2551" stop-color="#423830"/><stop offset="0.2864" stop-color="#3f342b"/><stop offset="0.3490" stop-color="#3d3228"/><stop offset="1.0000" stop-color="#3d3228"/></linearGradient><linearGradient id="sk7" x1="0" y1="0" x2="0" y2="1"><stop offset="0.0000" stop-color="#b9bdc7"/><stop offset="0.0235" stop-color="#bdc0c9"/><stop offset="0.0469" stop-color="#c1c4cb"/><stop offset="0.0704" stop-color="#c6c8ce"/><stop offset="0.0892" stop-color="#cacbd0"/><stop offset="0.1017" stop-color="#cdcdd1"/><stop offset="0.1080" stop-color="#cfcfd2"/><stop offset="0.1111" stop-color="#cccccf"/><stop offset="0.1142" stop-color="#c5c5c7"/><stop offset="0.1189" stop-color="#bbbabc"/><stop offset="0.1252" stop-color="#aeadaf"/><stop offset="0.1315" stop-color="#a2a1a2"/><stop offset="0.1377" stop-color="#979596"/><stop offset="0.1440" stop-color="#8d8b8b"/><stop offset="0.1502" stop-color="#848181"/><stop offset="0.1565" stop-color="#7c7878"/><stop offset="0.1628" stop-color="#74706f"/><stop offset="0.1690" stop-color="#6d6967"/><stop offset="0.1753" stop-color="#676260"/><stop offset="0.1815" stop-color="#615c59"/><stop offset="0.1878" stop-color="#5c5653"/><stop offset="0.1941" stop-color="#58514e"/><stop offset="0.2003" stop-color="#544d49"/><stop offset="0.2066" stop-color="#504944"/><stop offset="0.2144" stop-color="#4c453f"/><stop offset="0.2238" stop-color="#49413a"/><stop offset="0.2363" stop-color="#453c35"/><stop offset="0.2551" stop-color="#423830"/><stop offset="0.2864" stop-color="#3f342b"/><stop offset="0.3490" stop-color="#3d3228"/><stop offset="1.0000" stop-color="#3d3228"/></linearGradient><linearGradient id="sk8" x1="0" y1="0" x2="0" y2="1"><stop offset="0.0000" stop-color="#b9bcc7"/><stop offset="0.0235" stop-color="#bdc0c9"/><stop offset="0.0469" stop-color="#c1c3cb"/><stop offset="0.0704" stop-color="#c6c7cd"/><stop offset="0.0892" stop-color="#cacbd0"/><stop offset="0.1017" stop-color="#cdcdd1"/><stop offset="0.1080" stop-color="#cfcfd2"/><stop offset="0.1111" stop-color="#cccccf"/><stop offset="0.1142" stop-color="#c5c5c7"/><stop offset="0.1189" stop-color="#bbbabc"/><stop offset="0.1252" stop-color="#aeadae"/><stop offset="0.1315" stop-color="#a2a0a2"/><stop offset="0.1377" stop-color="#979596"/><stop offset="0.1440" stop-color="#8d8a8b"/><stop offset="0.1502" stop-color="#838180"/><stop offset="0.1565" stop-color="#7b7877"/><stop offset="0.1628" stop-color="#73706e"/><stop offset="0.1690" stop-color="#6c6866"/><stop offset="0.1753" stop-color="#66615f"/><stop offset="0.1815" stop-color="#605b58"/><stop offset="0.1878" stop-color="#5b5652"/><stop offset="0.1941" stop-color="#57514d"/><stop offset="0.2003" stop-color="#534c48"/><stop offset="0.2066" stop-color="#504844"/><stop offset="0.2144" stop-color="#4c443f"/><stop offset="0.2238" stop-color="#48403a"/><stop offset="0.2363" stop-color="#453c35"/><stop offset="0.2551" stop-color="#41372f"/><stop offset="0.2864" stop-color="#3e342b"/><stop offset="0.3490" stop-color="#3d3228"/><stop offset="1.0000" stop-color="#3d3228"/></linearGradient><linearGradient id="sk9" x1="0" y1="0" x2="0" y2="1"><stop offset="0.0000" stop-color="#b9bcc7"/><stop offset="0.0235" stop-color="#bdc0c9"/><stop offset="0.0469" stop-color="#c1c3cb"/><stop offset="0.0704" stop-color="#c6c7cd"/><stop offset="0.0892" stop-color="#cacbd0"/><stop offset="0.1017" stop-color="#cdcdd1"/><stop offset="0.1080" stop-color="#cfcfd2"/><stop offset="0.1111" stop-color="#cccccf"/><stop offset="0.1142" stop-color="#c5c4c7"/><stop offset="0.1189" stop-color="#bababc"/><stop offset="0.1252" stop-color="#adacae"/><stop offset="0.1315" stop-color="#a1a0a1"/><stop offset="0.1377" stop-color="#969495"/><stop offset="0.1440" stop-color="#8c8a8a"/><stop offset="0.1502" stop-color="#838080"/><stop offset="0.1565" stop-color="#7a7776"/><stop offset="0.1628" stop-color="#726f6e"/><stop offset="0.1690" stop-color="#6b6766"/><stop offset="0.1753" stop-color="#65615e"/><stop offset="0.1815" stop-color="#605a58"/><stop offset="0.1878" stop-color="#5b5552"/><stop offset="0.1941" stop-color="#56504c"/><stop offset="0.2003" stop-color="#524c47"/><stop offset="0.2066" stop-color="#4f4843"/><stop offset="0.2144" stop-color="#4b443e"/><stop offset="0.2238" stop-color="#484039"/><stop offset="0.2363" stop-color="#443b34"/><stop offset="0.2551" stop-color="#41372f"/><stop offset="0.2864" stop-color="#3e342a"/><stop offset="0.3490" stop-color="#3d3228"/><stop offset="1.0000" stop-color="#3d3228"/></linearGradient><linearGradient id="sk10" x1="0" y1="0" x2="0" y2="1"><stop offset="0.0000" stop-color="#b8bcc7"/><stop offset="0.0235" stop-color="#bdc0c9"/><stop offset="0.0469" stop-color="#c1c3cb"/><stop offset="0.0704" stop-color="#c6c7cd"/><stop offset="0.0892" stop-color="#cacbcf"/><stop offset="0.1017" stop-color="#cdcdd1"/><stop offset="0.1080" stop-color="#cfcfd2"/><stop offset="0.1111" stop-color="#cccccf"/><stop offset="0.1142" stop-color="#c5c4c7"/><stop offset="0.1189" stop-color="#bababc"/><stop offset="0.1252" stop-color="#adacae"/><stop offset="0.1315" stop-color="#a19fa1"/><stop offset="0.1377" stop-color="#969495"/><stop offset="0.1440" stop-color="#8b8989"/><stop offset="0.1502" stop-color="#827f7f"/><stop offset="0.1565" stop-color="#7a7675"/><stop offset="0.1628" stop-color="#726e6d"/><stop offset="0.1690" stop-color="#6b6765"/><stop offset="0.1753" stop-color="#65605d"/><stop offset="0.1815" stop-color="#5f5a57"/><stop offset="0.1878" stop-color="#5a5451"/><stop offset="0.1941" stop-color="#564f4b"/><stop offset="0.2003" stop-color="#524b46"/><stop offset="0.2066" stop-color="#4e4742"/><stop offset="0.2144" stop-color="#4b433d"/><stop offset="0.2238" stop-color="#483f39"/><stop offset="0.2363" stop-color="#443b34"/><stop offset="0.2551" stop-color="#41372e"/><stop offset="0.2864" stop-color="#3e342a"/><stop offset="0.3490" stop-color="#3d3228"/><stop offset="1.0000" stop-color="#3d3228"/></linearGradient><linearGradient id="sk11" x1="0" y1="0" x2="0" y2="1"><stop offset="0.0000" stop-color="#b8bcc7"/><stop offset="0.0235" stop-color="#bcbfc9"/><stop offset="0.0469" stop-color="#c1c3cb"/><stop offset="0.0704" stop-color="#c6c7cd"/><stop offset="0.0892" stop-color="#cacbcf"/><stop offset="0.1017" stop-color="#cdcdd1"/><stop offset="0.1080" stop-color="#cfcfd2"/><stop offset="0.1111" stop-color="#cccccf"/><stop offset="0.1142" stop-color="#c5c4c7"/><stop offset="0.1189" stop-color="#bab9bc"/><stop offset="0.1252" stop-color="#adacad"/><stop offset="0.1315" stop-color="#a09fa0"/><stop offset="0.1377" stop-color="#959394"/><stop offset="0.1440" stop-color="#8b8989"/><stop offset="0.1502" stop-color="#817f7e"/><stop offset="0.1565" stop-color="#797675"/><stop offset="0.1628" stop-color="#716d6c"/><stop offset="0.1690" stop-color="#6a6664"/><stop offset="0.1753" stop-color="#645f5d"/><stop offset="0.1815" stop-color="#5e5956"/><stop offset="0.1878" stop-color="#595450"/><stop offset="0.1941" stop-color="#554f4b"/><stop offset="0.2003" stop-color="#514a46"/><stop offset="0.2066" stop-color="#4e4741"/><stop offset="0.2144" stop-color="#4b433d"/><stop offset="0.2238" stop-color="#473f38"/><stop offset="0.2363" stop-color="#443b33"/><stop offset="0.2551" stop-color="#41372e"/><stop offset="0.2864" stop-color="#3e342a"/><stop offset="0.3490" stop-color="#3d3228"/><stop offset="1.0000" stop-color="#3d3228"/></linearGradient><linearGradient id="sk12" x1="0" y1="0" x2="0" y2="1"><stop offset="0.0000" stop-color="#b8bcc7"/><stop offset="0.0235" stop-color="#bcbfc9"/><stop offset="0.0469" stop-color="#c1c3cb"/><stop offset="0.0704" stop-color="#c6c7cd"/><stop offset="0.0892" stop-color="#cacbcf"/><stop offset="0.1017" stop-color="#cdcdd1"/><stop offset="0.1080" stop-color="#cfcfd2"/><stop offset="0.1111" stop-color="#cccccf"/><stop offset="0.1142" stop-color="#c4c4c7"/><stop offset="0.1189" stop-color="#bab9bb"/><stop offset="0.1252" stop-color="#acabad"/><stop offset="0.1315" stop-color="#a09fa0"/><stop offset="0.1377" stop-color="#959393"/><stop offset="0.1440" stop-color="#8a8888"/><stop offset="0.1502" stop-color="#817e7e"/><stop offset="0.1565" stop-color="#787574"/><stop offset="0.1628" stop-color="#716d6b"/><stop offset="0.1690" stop-color="#6a6563"/><stop offset="0.1753" stop-color="#635e5c"/><stop offset="0.1815" stop-color="#5e5855"/><stop offset="0.1878" stop-color="#59534f"/><stop offset="0.1941" stop-color="#554e4a"/><stop offset="0.2003" stop-color="#514a45"/><stop offset="0.2066" stop-color="#4e4641"/><stop offset="0.2144" stop-color="#4a423c"/><stop offset="0.2238" stop-color="#473e38"/><stop offset="0.2363" stop-color="#443a33"/><stop offset="0.2551" stop-color="#40362e"/><stop offset="0.2864" stop-color="#3e332a"/><stop offset="0.3490" stop-color="#3d3228"/><stop offset="1.0000" stop-color="#3d3228"/></linearGradient><linearGradient id="sk13" x1="0" y1="0" x2="0" y2="1"><stop offset="0.0000" stop-color="#b8bcc6"/><stop offset="0.0235" stop-color="#bcbfc9"/><stop offset="0.0469" stop-color="#c1c3cb"/><stop offset="0.0704" stop-color="#c6c7cd"/><stop offset="0.0892" stop-color="#cacbcf"/><stop offset="0.1017" stop-color="#cdcdd1"/><stop offset="0.1080" stop-color="#cfcfd2"/><stop offset="0.1111" stop-color="#cccccf"/><stop offset="0.1142" stop-color="#c4c4c7"/><stop offset="0.1189" stop-color="#bab9bb"/><stop offset="0.1252" stop-color="#acabad"/><stop offset="0.1315" stop-color="#a09e9f"/><stop offset="0.1377" stop-color="#949293"/><stop offset="0.1440" stop-color="#8a8788"/><stop offset="0.1502" stop-color="#807d7d"/><stop offset="0.1565" stop-color="#787473"/><stop offset="0.1628" stop-color="#706c6b"/><stop offset="0.1690" stop-color="#696563"/><stop offset="0.1753" stop-color="#635e5b"/><stop offset="0.1815" stop-color="#5d5855"/><stop offset="0.1878" stop-color="#58524f"/><stop offset="0.1941" stop-color="#544e49"/><stop offset="0.2003" stop-color="#504945"/><stop offset="0.2066" stop-color="#4d4640"/><stop offset="0.2144" stop-color="#4a423c"/><stop offset="0.2238" stop-color="#463e37"/><stop offset="0.2363" stop-color="#433a32"/><stop offset="0.2551" stop-color="#40362e"/><stop offset="0.2864" stop-color="#3e332a"/><stop offset="0.3490" stop-color="#3d3228"/><stop offset="1.0000" stop-color="#3d3228"/></linearGradient><linearGradient id="sk14" x1="0" y1="0" x2="0" y2="1"><stop offset="0.0000" stop-color="#b8bcc6"/><stop offset="0.0235" stop-color="#bcbfc8"/><stop offset="0.0469" stop-color="#c1c3cb"/><stop offset="0.0704" stop-color="#c6c7cd"/><stop offset="0.0892" stop-color="#cacbcf"/><stop offset="0.1017" stop-color="#cdcdd1"/><stop offset="0.1080" stop-color="#cfcfd2"/><stop offset="0.1111" stop-color="#cccccf"/><stop offset="0.1142" stop-color="#c4c4c7"/><stop offset="0.1189" stop-color="#b9b9bb"/><stop offset="0.1252" stop-color="#acabac"/><stop offset="0.1315" stop-color="#9f9e9f"/><stop offset="0.1377" stop-color="#949293"/><stop offset="0.1440" stop-color="#898787"/><stop offset="0.1502" stop-color="#807d7d"/><stop offset="0.1565" stop-color="#777473"/><stop offset="0.1628" stop-color="#6f6c6a"/><stop offset="0.1690" stop-color="#686462"/><stop offset="0.1753" stop-color="#625d5b"/><stop offset="0.1815" stop-color="#5d5754"/><stop offset="0.1878" stop-color="#58524e"/><stop offset="0.1941" stop-color="#544d49"/><stop offset="0.2003" stop-color="#504944"/><stop offset="0.2066" stop-color="#4d4540"/><stop offset="0.2144" stop-color="#49413b"/><stop offset="0.2238" stop-color="#463d37"/><stop offset="0.2363" stop-color="#433a32"/><stop offset="0.2551" stop-color="#40362d"/><stop offset="0.2864" stop-color="#3e332a"/><stop offset="0.3490" stop-color="#3d3228"/><stop offset="1.0000" stop-color="#3d3228"/></linearGradient><linearGradient id="sk15" x1="0" y1="0" x2="0" y2="1"><stop offset="0.0000" stop-color="#b8bbc6"/><stop offset="0.0235" stop-color="#bcbfc8"/><stop offset="0.0469" stop-color="#c1c3cb"/><stop offset="0.0704" stop-color="#c6c7cd"/><stop offset="0.0892" stop-color="#cacbcf"/><stop offset="0.1017" stop-color="#cdcdd1"/><stop offset="0.1080" stop-color="#cfcfd2"/><stop offset="0.1111" stop-color="#cccccf"/><stop offset="0.1142" stop-color="#c4c4c7"/><stop offset="0.1189" stop-color="#b9b9bb"/><stop offset="0.1252" stop-color="#acaaac"/><stop offset="0.1315" stop-color="#9f9d9f"/><stop offset="0.1377" stop-color="#939292"/><stop offset="0.1440" stop-color="#898787"/><stop offset="0.1502" stop-color="#7f7c7c"/><stop offset="0.1565" stop-color="#777372"/><stop offset="0.1628" stop-color="#6f6b6a"/><stop offset="0.1690" stop-color="#686461"/><stop offset="0.1753" stop-color="#625d5a"/><stop offset="0.1815" stop-color="#5c5753"/><stop offset="0.1878" stop-color="#57514e"/><stop offset="0.1941" stop-color="#534d48"/><stop offset="0.2003" stop-color="#4f4843"/><stop offset="0.2066" stop-color="#4c453f"/><stop offset="0.2144" stop-color="#49413b"/><stop offset="0.2238" stop-color="#463d36"/><stop offset="0.2363" stop-color="#433932"/><stop offset="0.2551" stop-color="#40362d"/><stop offset="0.2864" stop-color="#3e332a"/><stop offset="0.3490" stop-color="#3d3228"/><stop offset="1.0000" stop-color="#3d3228"/></linearGradient><linearGradient id="sk16" x1="0" y1="0" x2="0" y2="1"><stop offset="0.0000" stop-color="#b7bbc6"/><stop offset="0.0235" stop-color="#bcbfc8"/><stop offset="0.0469" stop-color="#c0c3cb"/><stop offset="0.0704" stop-color="#c5c7cd"/><stop offset="0.0892" stop-color="#cacbcf"/><stop offset="0.1017" stop-color="#cdcdd1"/><stop offset="0.1080" stop-color="#cfcfd2"/><stop offset="0.1111" stop-color="#cccccf"/><stop offset="0.1142" stop-color="#c4c4c6"/><stop offset="0.1189" stop-color="#b9b8bb"/><stop offset="0.1252" stop-color="#abaaac"/><stop offset="0.1315" stop-color="#9f9d9e"/><stop offset="0.1377" stop-color="#939192"/><stop offset="0.1440" stop-color="#898686"/><stop offset="0.1502" stop-color="#7f7c7c"/><stop offset="0.1565" stop-color="#767372"/><stop offset="0.1628" stop-color="#6e6b69"/><stop offset="0.1690" stop-color="#686361"/><stop offset="0.1753" stop-color="#615c5a"/><stop offset="0.1815" stop-color="#5c5653"/><stop offset="0.1878" stop-color="#57514d"/><stop offset="0.1941" stop-color="#534c48"/><stop offset="0.2003" stop-color="#4f4843"/><stop offset="0.2066" stop-color="#4c443f"/><stop offset="0.2144" stop-color="#49413a"/><stop offset="0.2238" stop-color="#463d36"/><stop offset="0.2363" stop-color="#433931"/><stop offset="0.2551" stop-color="#40362d"/><stop offset="0.2864" stop-color="#3e332a"/><stop offset="0.3490" stop-color="#3d3228"/><stop offset="1.0000" stop-color="#3d3228"/></linearGradient><linearGradient id="sk17" x1="0" y1="0" x2="0" y2="1"><stop offset="0.0000" stop-color="#b7bbc6"/><stop offset="0.0235" stop-color="#bcbfc8"/><stop offset="0.0469" stop-color="#c0c3cb"/><stop offset="0.0704" stop-color="#c5c7cd"/><stop offset="0.0892" stop-color="#cacbcf"/><stop offset="0.1017" stop-color="#cdcdd1"/><stop offset="0.1080" stop-color="#cfcfd2"/><stop offset="0.1111" stop-color="#cccccf"/><stop offset="0.1142" stop-color="#c4c4c6"/><stop offset="0.1189" stop-color="#b9b8bb"/><stop offset="0.1252" stop-color="#abaaac"/><stop offset="0.1315" stop-color="#9e9d9e"/><stop offset="0.1377" stop-color="#939191"/><stop offset="0.1440" stop-color="#888686"/><stop offset="0.1502" stop-color="#7f7c7b"/><stop offset="0.1565" stop-color="#767271"/><stop offset="0.1628" stop-color="#6e6a69"/><stop offset="0.1690" stop-color="#676360"/><stop offset="0.1753" stop-color="#615c59"/><stop offset="0.1815" stop-color="#5b5652"/><stop offset="0.1878" stop-color="#57504d"/><stop offset="0.1941" stop-color="#524c47"/><stop offset="0.2003" stop-color="#4f4843"/><stop offset="0.2066" stop-color="#4c443e"/><stop offset="0.2144" stop-color="#48403a"/><stop offset="0.2238" stop-color="#453d36"/><stop offset="0.2363" stop-color="#423931"/><stop offset="0.2551" stop-color="#40362d"/><stop offset="0.2864" stop-color="#3e3329"/><stop offset="0.3490" stop-color="#3d3228"/><stop offset="1.0000" stop-color="#3d3228"/></linearGradient><linearGradient id="sk18" x1="0" y1="0" x2="0" y2="1"><stop offset="0.0000" stop-color="#b7bbc6"/><stop offset="0.0235" stop-color="#bcbfc8"/><stop offset="0.0469" stop-color="#c0c3cb"/><stop offset="0.0704" stop-color="#c5c7cd"/><stop offset="0.0892" stop-color="#cacbcf"/><stop offset="0.1017" stop-color="#cdcdd1"/><stop offset="0.1080" stop-color="#cfcfd2"/><stop offset="0.1111" stop-color="#cccccf"/><stop offset="0.1142" stop-color="#c4c4c6"/><stop offset="0.1189" stop-color="#b9b8ba"/><stop offset="0.1252" stop-color="#abaaac"/><stop offset="0.1315" stop-color="#9e9d9e"/><stop offset="0.1377" stop-color="#939191"/><stop offset="0.1440" stop-color="#888585"/><stop offset="0.1502" stop-color="#7e7b7b"/><stop offset="0.1565" stop-color="#767271"/><stop offset="0.1628" stop-color="#6e6a68"/><stop offset="0.1690" stop-color="#676260"/><stop offset="0.1753" stop-color="#615b59"/><stop offset="0.1815" stop-color="#5b5552"/><stop offset="0.1878" stop-color="#56504c"/><stop offset="0.1941" stop-color="#524b47"/><stop offset="0.2003" stop-color="#4f4742"/><stop offset="0.2066" stop-color="#4b443e"/><stop offset="0.2144" stop-color="#48403a"/><stop offset="0.2238" stop-color="#453c35"/><stop offset="0.2363" stop-color="#423931"/><stop offset="0.2551" stop-color="#40352d"/><stop offset="0.2864" stop-color="#3e3329"/><stop offset="0.3490" stop-color="#3d3228"/><stop offset="1.0000" stop-color="#3d3228"/></linearGradient><linearGradient id="sk19" x1="0" y1="0" x2="0" y2="1"><stop offset="0.0000" stop-color="#b7bbc6"/><stop offset="0.0235" stop-color="#bcbfc8"/><stop offset="0.0469" stop-color="#c0c3cb"/><stop offset="0.0704" stop-color="#c5c7cd"/><stop offset="0.0892" stop-color="#cacbcf"/><stop offset="0.1017" stop-color="#cdcdd1"/><stop offset="0.1080" stop-color="#cecfd2"/><stop offset="0.1111" stop-color="#cccccf"/><stop offset="0.1142" stop-color="#c4c4c6"/><stop offset="0.1189" stop-color="#b9b8ba"/><stop offset="0.1252" stop-color="#abaaab"/><stop offset="0.1315" stop-color="#9e9c9e"/><stop offset="0.1377" stop-color="#929091"/><stop offset="0.1440" stop-color="#888585"/><stop offset="0.1502" stop-color="#7e7b7a"/><stop offset="0.1565" stop-color="#757271"/><stop offset="0.1628" stop-color="#6d6968"/><stop offset="0.1690" stop-color="#666260"/><stop offset="0.1753" stop-color="#605b58"/><stop offset="0.1815" stop-color="#5b5552"/><stop offset="0.1878" stop-color="#56504c"/><stop offset="0.1941" stop-color="#524b47"/><stop offset="0.2003" stop-color="#4e4742"/><stop offset="0.2066" stop-color="#4b433e"/><stop offset="0.2144" stop-color="#484039"/><stop offset="0.2238" stop-color="#453c35"/><stop offset="0.2363" stop-color="#423931"/><stop offset="0.2551" stop-color="#40352d"/><stop offset="0.2864" stop-color="#3e3329"/><stop offset="0.3490" stop-color="#3d3228"/><stop offset="1.0000" stop-color="#3d3228"/></linearGradient><linearGradient id="sk20" x1="0" y1="0" x2="0" y2="1"><stop offset="0.0000" stop-color="#b7bbc6"/><stop offset="0.0235" stop-color="#bbbfc8"/><stop offset="0.0469" stop-color="#c0c3cb"/><stop offset="0.0704" stop-color="#c5c7cd"/><stop offset="0.0892" stop-color="#cacbcf"/><stop offset="0.1017" stop-color="#cdcdd1"/><stop offset="0.1080" stop-color="#cecfd2"/><stop offset="0.1111" stop-color="#cccccf"/><stop offset="0.1142" stop-color="#c4c4c6"/><stop offset="0.1189" stop-color="#b9b8ba"/><stop offset="0.1252" stop-color="#abaaab"/><stop offset="0.1315" stop-color="#9e9c9d"/><stop offset="0.1377" stop-color="#929091"/><stop offset="0.1440" stop-color="#878585"/><stop offset="0.1502" stop-color="#7e7b7a"/><stop offset="0.1565" stop-color="#757170"/><stop offset="0.1628" stop-color="#6d6967"/><stop offset="0.1690" stop-color="#66625f"/><stop offset="0.1753" stop-color="#605b58"/><stop offset="0.1815" stop-color="#5b5551"/><stop offset="0.1878" stop-color="#564f4b"/><stop offset="0.1941" stop-color="#524b46"/><stop offset="0.2003" stop-color="#4e4742"/><stop offset="0.2066" stop-color="#4b433d"/><stop offset="0.2144" stop-color="#484039"/><stop offset="0.2238" stop-color="#453c35"/><stop offset="0.2363" stop-color="#423831"/><stop offset="0.2551" stop-color="#40352c"/><stop offset="0.2864" stop-color="#3e3329"/><stop offset="0.3490" stop-color="#3d3228"/><stop offset="1.0000" stop-color="#3d3228"/></linearGradient><linearGradient id="sk21" x1="0" y1="0" x2="0" y2="1"><stop offset="0.0000" stop-color="#b7bbc6"/><stop offset="0.0235" stop-color="#bbbfc8"/><stop offset="0.0469" stop-color="#c0c2ca"/><stop offset="0.0704" stop-color="#c5c7cd"/><stop offset="0.0892" stop-color="#cacbcf"/><stop offset="0.1017" stop-color="#cdcdd1"/><stop offset="0.1080" stop-color="#cecfd2"/><stop offset="0.1111" stop-color="#cccccf"/><stop offset="0.1142" stop-color="#c4c4c6"/><stop offset="0.1189" stop-color="#b9b8ba"/><stop offset="0.1252" stop-color="#aba9ab"/><stop offset="0.1315" stop-color="#9e9c9d"/><stop offset="0.1377" stop-color="#929090"/><stop offset="0.1440" stop-color="#878585"/><stop offset="0.1502" stop-color="#7e7b7a"/><stop offset="0.1565" stop-color="#757170"/><stop offset="0.1628" stop-color="#6d6967"/><stop offset="0.1690" stop-color="#66615f"/><stop offset="0.1753" stop-color="#605b58"/><stop offset="0.1815" stop-color="#5a5551"/><stop offset="0.1878" stop-color="#564f4b"/><stop offset="0.1941" stop-color="#514b46"/><stop offset="0.2003" stop-color="#4e4741"/><stop offset="0.2066" stop-color="#4b433d"/><stop offset="0.2144" stop-color="#483f39"/><stop offset="0.2238" stop-color="#453c35"/><stop offset="0.2363" stop-color="#423830"/><stop offset="0.2551" stop-color="#40352c"/><stop offset="0.2864" stop-color="#3e3329"/><stop offset="0.3490" stop-color="#3d3228"/><stop offset="1.0000" stop-color="#3d3228"/></linearGradient><linearGradient id="sk22" x1="0" y1="0" x2="0" y2="1"><stop offset="0.0000" stop-color="#b7bbc6"/><stop offset="0.0235" stop-color="#bbbfc8"/><stop offset="0.0469" stop-color="#c0c2ca"/><stop offset="0.0704" stop-color="#c5c7cd"/><stop offset="0.0892" stop-color="#cacbcf"/><stop offset="0.1017" stop-color="#cdcdd1"/><stop offset="0.1080" stop-color="#cecfd2"/><stop offset="0.1111" stop-color="#cccccf"/><stop offset="0.1142" stop-color="#c4c4c6"/><stop offset="0.1189" stop-color="#b8b8ba"/><stop offset="0.1252" stop-color="#aaa9ab"/><stop offset="0.1315" stop-color="#9e9c9d"/><stop offset="0.1377" stop-color="#929090"/><stop offset="0.1440" stop-color="#878585"/><stop offset="0.1502" stop-color="#7d7a7a"/><stop offset="0.1565" stop-color="#757170"/><stop offset="0.1628" stop-color="#6d6967"/><stop offset="0.1690" stop-color="#66615f"/><stop offset="0.1753" stop-color="#605a58"/><stop offset="0.1815" stop-color="#5a5451"/><stop offset="0.1878" stop-color="#554f4b"/><stop offset="0.1941" stop-color="#514a46"/><stop offset="0.2003" stop-color="#4e4641"/><stop offset="0.2066" stop-color="#4b433d"/><stop offset="0.2144" stop-color="#483f39"/><stop offset="0.2238" stop-color="#453c35"/><stop offset="0.2363" stop-color="#423830"/><stop offset="0.2551" stop-color="#3f352c"/><stop offset="0.2864" stop-color="#3e3329"/><stop offset="0.3490" stop-color="#3d3228"/><stop offset="1.0000" stop-color="#3d3228"/></linearGradient><linearGradient id="sk23" x1="0" y1="0" x2="0" y2="1"><stop offset="0.0000" stop-color="#b7bbc6"/><stop offset="0.0235" stop-color="#bbbec8"/><stop offset="0.0469" stop-color="#c0c2ca"/><stop offset="0.0704" stop-color="#c5c7cd"/><stop offset="0.0892" stop-color="#cacbcf"/><stop offset="0.1017" stop-color="#cdcdd1"/><stop offset="0.1080" stop-color="#cecfd2"/><stop offset="0.1111" stop-color="#cccccf"/><stop offset="0.1142" stop-color="#c4c4c6"/><stop offset="0.1189" stop-color="#b8b8ba"/><stop offset="0.1252" stop-color="#aaa9ab"/><stop offset="0.1315" stop-color="#9d9c9d"/><stop offset="0.1377" stop-color="#929090"/><stop offset="0.1440" stop-color="#878484"/><stop offset="0.1502" stop-color="#7d7a7a"/><stop offset="0.1565" stop-color="#757170"/><stop offset="0.1628" stop-color="#6d6967"/><stop offset="0.1690" stop-color="#66615f"/><stop offset="0.1753" stop-color="#605a57"/><stop offset="0.1815" stop-color="#5a5451"/><stop offset="0.1878" stop-color="#554f4b"/><stop offset="0.1941" stop-color="#514a46"/><stop offset="0.2003" stop-color="#4e4641"/><stop offset="0.2066" stop-color="#4b433d"/><stop offset="0.2144" stop-color="#483f39"/><stop offset="0.2238" stop-color="#453c34"/><stop offset="0.2363" stop-color="#423830"/><stop offset="0.2551" stop-color="#3f352c"/><stop offset="0.2864" stop-color="#3e3329"/><stop offset="0.3490" stop-color="#3d3228"/><stop offset="1.0000" stop-color="#3d3228"/></linearGradient><linearGradient id="sk24" x1="0" y1="0" x2="0" y2="1"><stop offset="0.0000" stop-color="#b7bbc6"/><stop offset="0.0235" stop-color="#bbbec8"/><stop offset="0.0469" stop-color="#c0c2ca"/><stop offset="0.0704" stop-color="#c5c7cd"/><stop offset="0.0892" stop-color="#cacbcf"/><stop offset="0.1017" stop-color="#cdcdd1"/><stop offset="0.1080" stop-color="#cecfd2"/><stop offset="0.1111" stop-color="#cccccf"/><stop offset="0.1142" stop-color="#c4c4c6"/><stop offset="0.1189" stop-color="#b8b8ba"/><stop offset="0.1252" stop-color="#aaa9ab"/><stop offset="0.1315" stop-color="#9d9c9d"/><stop offset="0.1377" stop-color="#929090"/><stop offset="0.1440" stop-color="#878484"/><stop offset="0.1502" stop-color="#7d7a7a"/><stop offset="0.1565" stop-color="#747170"/><stop offset="0.1628" stop-color="#6d6967"/><stop offset="0.1690" stop-color="#66615f"/><stop offset="0.1753" stop-color="#5f5a57"/><stop offset="0.1815" stop-color="#5a5451"/><stop offset="0.1878" stop-color="#554f4b"/><stop offset="0.1941" stop-color="#514a46"/><stop offset="0.2003" stop-color="#4e4641"/><stop offset="0.2066" stop-color="#4b433d"/><stop offset="0.2144" stop-color="#483f39"/><stop offset="0.2238" stop-color="#453c34"/><stop offset="0.2363" stop-color="#423830"/><stop offset="0.2551" stop-color="#3f352c"/><stop offset="0.2864" stop-color="#3e3329"/><stop offset="0.3490" stop-color="#3d3228"/><stop offset="1.0000" stop-color="#3d3228"/></linearGradient><linearGradient id="sk25" x1="0" y1="0" x2="0" y2="1"><stop offset="0.0000" stop-color="#b7bbc6"/><stop offset="0.0235" stop-color="#bbbec8"/><stop offset="0.0469" stop-color="#c0c2ca"/><stop offset="0.0704" stop-color="#c5c7cd"/><stop offset="0.0892" stop-color="#cacbcf"/><stop offset="0.1017" stop-color="#cdcdd1"/><stop offset="0.1080" stop-color="#cecfd2"/><stop offset="0.1111" stop-color="#cccccf"/><stop offset="0.1142" stop-color="#c4c4c6"/><stop offset="0.1189" stop-color="#b8b8ba"/><stop offset="0.1252" stop-color="#aaa9ab"/><stop offset="0.1315" stop-color="#9d9c9d"/><stop offset="0.1377" stop-color="#929090"/><stop offset="0.1440" stop-color="#878484"/><stop offset="0.1502" stop-color="#7d7a7a"/><stop offset="0.1565" stop-color="#747170"/><stop offset="0.1628" stop-color="#6d6967"/><stop offset="0.1690" stop-color="#66615f"/><stop offset="0.1753" stop-color="#5f5a57"/><stop offset="0.1815" stop-color="#5a5451"/><stop offset="0.1878" stop-color="#554f4b"/><stop offset="0.1941" stop-color="#514a46"/><stop offset="0.2003" stop-color="#4e4641"/><stop offset="0.2066" stop-color="#4b433d"/><stop offset="0.2144" stop-color="#483f39"/><stop offset="0.2238" stop-color="#453c34"/><stop offset="0.2363" stop-color="#423830"/><stop offset="0.2551" stop-color="#3f352c"/><stop offset="0.2864" stop-color="#3e3329"/><stop offset="0.3490" stop-color="#3d3228"/><stop offset="1.0000" stop-color="#3d3228"/></linearGradient><linearGradient id="sk26" x1="0" y1="0" x2="0" y2="1"><stop offset="0.0000" stop-color="#b7bbc6"/><stop offset="0.0235" stop-color="#bbbec8"/><stop offset="0.0469" stop-color="#c0c2ca"/><stop offset="0.0704" stop-color="#c5c7cd"/><stop offset="0.0892" stop-color="#cacbcf"/><stop offset="0.1017" stop-color="#cdcdd1"/><stop offset="0.1080" stop-color="#cecfd2"/><stop offset="0.1111" stop-color="#cccccf"/><stop offset="0.1142" stop-color="#c4c4c6"/><stop offset="0.1189" stop-color="#b8b8ba"/><stop offset="0.1252" stop-color="#aaa9ab"/><stop offset="0.1315" stop-color="#9d9c9d"/><stop offset="0.1377" stop-color="#929090"/><stop offset="0.1440" stop-color="#878484"/><stop offset="0.1502" stop-color="#7d7a7a"/><stop offset="0.1565" stop-color="#757170"/><stop offset="0.1628" stop-color="#6d6967"/><stop offset="0.1690" stop-color="#66615f"/><stop offset="0.1753" stop-color="#605a57"/><stop offset="0.1815" stop-color="#5a5451"/><stop offset="0.1878" stop-color="#554f4b"/><stop offset="0.1941" stop-color="#514a46"/><stop offset="0.2003" stop-color="#4e4641"/><stop offset="0.2066" stop-color="#4b433d"/><stop offset="0.2144" stop-color="#483f39"/><stop offset="0.2238" stop-color="#453c34"/><stop offset="0.2363" stop-color="#423830"/><stop offset="0.2551" stop-color="#3f352c"/><stop offset="0.2864" stop-color="#3e3329"/><stop offset="0.3490" stop-color="#3d3228"/><stop offset="1.0000" stop-color="#3d3228"/></linearGradient><linearGradient id="sk27" x1="0" y1="0" x2="0" y2="1"><stop offset="0.0000" stop-color="#b7bbc6"/><stop offset="0.0235" stop-color="#bbbfc8"/><stop offset="0.0469" stop-color="#c0c2ca"/><stop offset="0.0704" stop-color="#c5c7cd"/><stop offset="0.0892" stop-color="#cacbcf"/><stop offset="0.1017" stop-color="#cdcdd1"/><stop offset="0.1080" stop-color="#cecfd2"/><stop offset="0.1111" stop-color="#cccccf"/><stop offset="0.1142" stop-color="#c4c4c6"/><stop offset="0.1189" stop-color="#b8b8ba"/><stop offset="0.1252" stop-color="#aaa9ab"/><stop offset="0.1315" stop-color="#9e9c9d"/><stop offset="0.1377" stop-color="#929090"/><stop offset="0.1440" stop-color="#878585"/><stop offset="0.1502" stop-color="#7d7a7a"/><stop offset="0.1565" stop-color="#757170"/><stop offset="0.1628" stop-color="#6d6967"/><stop offset="0.1690" stop-color="#66615f"/><stop offset="0.1753" stop-color="#605a58"/><stop offset="0.1815" stop-color="#5a5451"/><stop offset="0.1878" stop-color="#554f4b"/><stop offset="0.1941" stop-color="#514a46"/><stop offset="0.2003" stop-color="#4e4641"/><stop offset="0.2066" stop-color="#4b433d"/><stop offset="0.2144" stop-color="#483f39"/><stop offset="0.2238" stop-color="#453c35"/><stop offset="0.2363" stop-color="#423830"/><stop offset="0.2551" stop-color="#3f352c"/><stop offset="0.2864" stop-color="#3e3329"/><stop offset="0.3490" stop-color="#3d3228"/><stop offset="1.0000" stop-color="#3d3228"/></linearGradient><linearGradient id="sk28" x1="0" y1="0" x2="0" y2="1"><stop offset="0.0000" stop-color="#b7bbc6"/><stop offset="0.0235" stop-color="#bbbfc8"/><stop offset="0.0469" stop-color="#c0c2ca"/><stop offset="0.0704" stop-color="#c5c7cd"/><stop offset="0.0892" stop-color="#cacbcf"/><stop offset="0.1017" stop-color="#cdcdd1"/><stop offset="0.1080" stop-color="#cecfd2"/><stop offset="0.1111" stop-color="#cccccf"/><stop offset="0.1142" stop-color="#c4c4c6"/><stop offset="0.1189" stop-color="#b9b8ba"/><stop offset="0.1252" stop-color="#aba9ab"/><stop offset="0.1315" stop-color="#9e9c9d"/><stop offset="0.1377" stop-color="#929090"/><stop offset="0.1440" stop-color="#878585"/><stop offset="0.1502" stop-color="#7e7b7a"/><stop offset="0.1565" stop-color="#757170"/><stop offset="0.1628" stop-color="#6d6967"/><stop offset="0.1690" stop-color="#66615f"/><stop offset="0.1753" stop-color="#605b58"/><stop offset="0.1815" stop-color="#5a5551"/><stop offset="0.1878" stop-color="#564f4b"/><stop offset="0.1941" stop-color="#514b46"/><stop offset="0.2003" stop-color="#4e4741"/><stop offset="0.2066" stop-color="#4b433d"/><stop offset="0.2144" stop-color="#483f39"/><stop offset="0.2238" stop-color="#453c35"/><stop offset="0.2363" stop-color="#423830"/><stop offset="0.2551" stop-color="#40352c"/><stop offset="0.2864" stop-color="#3e3329"/><stop offset="0.3490" stop-color="#3d3228"/><stop offset="1.0000" stop-color="#3d3228"/></linearGradient><linearGradient id="sk29" x1="0" y1="0" x2="0" y2="1"><stop offset="0.0000" stop-color="#b7bbc6"/><stop offset="0.0235" stop-color="#bbbfc8"/><stop offset="0.0469" stop-color="#c0c3cb"/><stop offset="0.0704" stop-color="#c5c7cd"/><stop offset="0.0892" stop-color="#cacbcf"/><stop offset="0.1017" stop-color="#cdcdd1"/><stop offset="0.1080" stop-color="#cecfd2"/><stop offset="0.1111" stop-color="#cccccf"/><stop offset="0.1142" stop-color="#c4c4c6"/><stop offset="0.1189" stop-color="#b9b8ba"/><stop offset="0.1252" stop-color="#abaaab"/><stop offset="0.1315" stop-color="#9e9c9d"/><stop offset="0.1377" stop-color="#929091"/><stop offset="0.1440" stop-color="#878585"/><stop offset="0.1502" stop-color="#7e7b7a"/><stop offset="0.1565" stop-color="#757170"/><stop offset="0.1628" stop-color="#6d6967"/><stop offset="0.1690" stop-color="#66625f"/><stop offset="0.1753" stop-color="#605b58"/><stop offset="0.1815" stop-color="#5b5551"/><stop offset="0.1878" stop-color="#564f4b"/><stop offset="0.1941" stop-color="#524b46"/><stop offset="0.2003" stop-color="#4e4742"/><stop offset="0.2066" stop-color="#4b433d"/><stop offset="0.2144" stop-color="#484039"/><stop offset="0.2238" stop-color="#453c35"/><stop offset="0.2363" stop-color="#423831"/><stop offset="0.2551" stop-color="#40352c"/><stop offset="0.2864" stop-color="#3e3329"/><stop offset="0.3490" stop-color="#3d3228"/><stop offset="1.0000" stop-color="#3d3228"/></linearGradient><linearGradient id="sk30" x1="0" y1="0" x2="0" y2="1"><stop offset="0.0000" stop-color="#b7bbc6"/><stop offset="0.0235" stop-color="#bcbfc8"/><stop offset="0.0469" stop-color="#c0c3cb"/><stop offset="0.0704" stop-color="#c5c7cd"/><stop offset="0.0892" stop-color="#cacbcf"/><stop offset="0.1017" stop-color="#cdcdd1"/><stop offset="0.1080" stop-color="#cecfd2"/><stop offset="0.1111" stop-color="#cccccf"/><stop offset="0.1142" stop-color="#c4c4c6"/><stop offset="0.1189" stop-color="#b9b8ba"/><stop offset="0.1252" stop-color="#abaaab"/><stop offset="0.1315" stop-color="#9e9c9e"/><stop offset="0.1377" stop-color="#929091"/><stop offset="0.1440" stop-color="#888585"/><stop offset="0.1502" stop-color="#7e7b7a"/><stop offset="0.1565" stop-color="#757271"/><stop offset="0.1628" stop-color="#6d6968"/><stop offset="0.1690" stop-color="#666260"/><stop offset="0.1753" stop-color="#605b58"/><stop offset="0.1815" stop-color="#5b5552"/><stop offset="0.1878" stop-color="#56504c"/><stop offset="0.1941" stop-color="#524b47"/><stop offset="0.2003" stop-color="#4e4742"/><stop offset="0.2066" stop-color="#4b433e"/><stop offset="0.2144" stop-color="#484039"/><stop offset="0.2238" stop-color="#453c35"/><stop offset="0.2363" stop-color="#423931"/><stop offset="0.2551" stop-color="#40352d"/><stop offset="0.2864" stop-color="#3e3329"/><stop offset="0.3490" stop-color="#3d3228"/><stop offset="1.0000" stop-color="#3d3228"/></linearGradient><linearGradient id="sk31" x1="0" y1="0" x2="0" y2="1"><stop offset="0.0000" stop-color="#b7bbc6"/><stop offset="0.0235" stop-color="#bcbfc8"/><stop offset="0.0469" stop-color="#c0c3cb"/><stop offset="0.0704" stop-color="#c5c7cd"/><stop offset="0.0892" stop-color="#cacbcf"/><stop offset="0.1017" stop-color="#cdcdd1"/><stop offset="0.1080" stop-color="#cfcfd2"/><stop offset="0.1111" stop-color="#cccccf"/><stop offset="0.1142" stop-color="#c4c4c6"/><stop offset="0.1189" stop-color="#b9b8ba"/><stop offset="0.1252" stop-color="#abaaac"/><stop offset="0.1315" stop-color="#9e9d9e"/><stop offset="0.1377" stop-color="#939191"/><stop offset="0.1440" stop-color="#888585"/><stop offset="0.1502" stop-color="#7e7b7b"/><stop offset="0.1565" stop-color="#767271"/><stop offset="0.1628" stop-color="#6e6a68"/><stop offset="0.1690" stop-color="#676260"/><stop offset="0.1753" stop-color="#615b59"/><stop offset="0.1815" stop-color="#5b5552"/><stop offset="0.1878" stop-color="#56504c"/><stop offset="0.1941" stop-color="#524b47"/><stop offset="0.2003" stop-color="#4f4742"/><stop offset="0.2066" stop-color="#4b443e"/><stop offset="0.2144" stop-color="#48403a"/><stop offset="0.2238" stop-color="#453c35"/><stop offset="0.2363" stop-color="#423931"/><stop offset="0.2551" stop-color="#40352d"/><stop offset="0.2864" stop-color="#3e3329"/><stop offset="0.3490" stop-color="#3d3228"/><stop offset="1.0000" stop-color="#3d3228"/></linearGradient><linearGradient id="sk32" x1="0" y1="0" x2="0" y2="1"><stop offset="0.0000" stop-color="#b7bbc6"/><stop offset="0.0235" stop-color="#bcbfc8"/><stop offset="0.0469" stop-color="#c0c3cb"/><stop offset="0.0704" stop-color="#c5c7cd"/><stop offset="0.0892" stop-color="#cacbcf"/><stop offset="0.1017" stop-color="#cdcdd1"/><stop offset="0.1080" stop-color="#cfcfd2"/><stop offset="0.1111" stop-color="#cccccf"/><stop offset="0.1142" stop-color="#c4c4c6"/><stop offset="0.1189" stop-color="#b9b8bb"/><stop offset="0.1252" stop-color="#abaaac"/><stop offset="0.1315" stop-color="#9e9d9e"/><stop offset="0.1377" stop-color="#939191"/><stop offset="0.1440" stop-color="#888686"/><stop offset="0.1502" stop-color="#7f7c7b"/><stop offset="0.1565" stop-color="#767271"/><stop offset="0.1628" stop-color="#6e6a69"/><stop offset="0.1690" stop-color="#676360"/><stop offset="0.1753" stop-color="#615c59"/><stop offset="0.1815" stop-color="#5b5652"/><stop offset="0.1878" stop-color="#57504d"/><stop offset="0.1941" stop-color="#524c47"/><stop offset="0.2003" stop-color="#4f4843"/><stop offset="0.2066" stop-color="#4c443e"/><stop offset="0.2144" stop-color="#48403a"/><stop offset="0.2238" stop-color="#453d36"/><stop offset="0.2363" stop-color="#423931"/><stop offset="0.2551" stop-color="#40362d"/><stop offset="0.2864" stop-color="#3e3329"/><stop offset="0.3490" stop-color="#3d3228"/><stop offset="1.0000" stop-color="#3d3228"/></linearGradient><linearGradient id="sk33" x1="0" y1="0" x2="0" y2="1"><stop offset="0.0000" stop-color="#b7bbc6"/><stop offset="0.0235" stop-color="#bcbfc8"/><stop offset="0.0469" stop-color="#c0c3cb"/><stop offset="0.0704" stop-color="#c5c7cd"/><stop offset="0.0892" stop-color="#cacbcf"/><stop offset="0.1017" stop-color="#cdcdd1"/><stop offset="0.1080" stop-color="#cfcfd2"/><stop offset="0.1111" stop-color="#cccccf"/><stop offset="0.1142" stop-color="#c4c4c6"/><stop offset="0.1189" stop-color="#b9b8bb"/><stop offset="0.1252" stop-color="#abaaac"/><stop offset="0.1315" stop-color="#9f9d9e"/><stop offset="0.1377" stop-color="#939192"/><stop offset="0.1440" stop-color="#898686"/><stop offset="0.1502" stop-color="#7f7c7c"/><stop offset="0.1565" stop-color="#767372"/><stop offset="0.1628" stop-color="#6e6b69"/><stop offset="0.1690" stop-color="#686361"/><stop offset="0.1753" stop-color="#615c5a"/><stop offset="0.1815" stop-color="#5c5653"/><stop offset="0.1878" stop-color="#57514d"/><stop offset="0.1941" stop-color="#534c48"/><stop offset="0.2003" stop-color="#4f4843"/><stop offset="0.2066" stop-color="#4c443f"/><stop offset="0.2144" stop-color="#49413a"/><stop offset="0.2238" stop-color="#463d36"/><stop offset="0.2363" stop-color="#433931"/><stop offset="0.2551" stop-color="#40362d"/><stop offset="0.2864" stop-color="#3e332a"/><stop offset="0.3490" stop-color="#3d3228"/><stop offset="1.0000" stop-color="#3d3228"/></linearGradient><linearGradient id="sk34" x1="0" y1="0" x2="0" y2="1"><stop offset="0.0000" stop-color="#b8bbc6"/><stop offset="0.0235" stop-color="#bcbfc8"/><stop offset="0.0469" stop-color="#c1c3cb"/><stop offset="0.0704" stop-color="#c6c7cd"/><stop offset="0.0892" stop-color="#cacbcf"/><stop offset="0.1017" stop-color="#cdcdd1"/><stop offset="0.1080" stop-color="#cfcfd2"/><stop offset="0.1111" stop-color="#cccccf"/><stop offset="0.1142" stop-color="#c4c4c7"/><stop offset="0.1189" stop-color="#b9b9bb"/><stop offset="0.1252" stop-color="#acaaac"/><stop offset="0.1315" stop-color="#9f9d9f"/><stop offset="0.1377" stop-color="#939292"/><stop offset="0.1440" stop-color="#898787"/><stop offset="0.1502" stop-color="#7f7c7c"/><stop offset="0.1565" stop-color="#777372"/><stop offset="0.1628" stop-color="#6f6b6a"/><stop offset="0.1690" stop-color="#686461"/><stop offset="0.1753" stop-color="#625d5a"/><stop offset="0.1815" stop-color="#5c5753"/><stop offset="0.1878" stop-color="#57514e"/><stop offset="0.1941" stop-color="#534d48"/><stop offset="0.2003" stop-color="#4f4843"/><stop offset="0.2066" stop-color="#4c453f"/><stop offset="0.2144" stop-color="#49413b"/><stop offset="0.2238" stop-color="#463d36"/><stop offset="0.2363" stop-color="#433932"/><stop offset="0.2551" stop-color="#40362d"/><stop offset="0.2864" stop-color="#3e332a"/><stop offset="0.3490" stop-color="#3d3228"/><stop offset="1.0000" stop-color="#3d3228"/></linearGradient><linearGradient id="sk35" x1="0" y1="0" x2="0" y2="1"><stop offset="0.0000" stop-color="#b8bcc6"/><stop offset="0.0235" stop-color="#bcbfc8"/><stop offset="0.0469" stop-color="#c1c3cb"/><stop offset="0.0704" stop-color="#c6c7cd"/><stop offset="0.0892" stop-color="#cacbcf"/><stop offset="0.1017" stop-color="#cdcdd1"/><stop offset="0.1080" stop-color="#cfcfd2"/><stop offset="0.1111" stop-color="#cccccf"/><stop offset="0.1142" stop-color="#c4c4c7"/><stop offset="0.1189" stop-color="#b9b9bb"/><stop offset="0.1252" stop-color="#acabac"/><stop offset="0.1315" stop-color="#9f9e9f"/><stop offset="0.1377" stop-color="#949293"/><stop offset="0.1440" stop-color="#898787"/><stop offset="0.1502" stop-color="#807d7d"/><stop offset="0.1565" stop-color="#777473"/><stop offset="0.1628" stop-color="#6f6c6a"/><stop offset="0.1690" stop-color="#686462"/><stop offset="0.1753" stop-color="#625d5b"/><stop offset="0.1815" stop-color="#5d5754"/><stop offset="0.1878" stop-color="#58524e"/><stop offset="0.1941" stop-color="#544d49"/><stop offset="0.2003" stop-color="#504944"/><stop offset="0.2066" stop-color="#4d4540"/><stop offset="0.2144" stop-color="#49413b"/><stop offset="0.2238" stop-color="#463d37"/><stop offset="0.2363" stop-color="#433a32"/><stop offset="0.2551" stop-color="#40362d"/><stop offset="0.2864" stop-color="#3e332a"/><stop offset="0.3490" stop-color="#3d3228"/><stop offset="1.0000" stop-color="#3d3228"/></linearGradient><linearGradient id="sk36" x1="0" y1="0" x2="0" y2="1"><stop offset="0.0000" stop-color="#b8bcc6"/><stop offset="0.0235" stop-color="#bcbfc9"/><stop offset="0.0469" stop-color="#c1c3cb"/><stop offset="0.0704" stop-color="#c6c7cd"/><stop offset="0.0892" stop-color="#cacbcf"/><stop offset="0.1017" stop-color="#cdcdd1"/><stop offset="0.1080" stop-color="#cfcfd2"/><stop offset="0.1111" stop-color="#cccccf"/><stop offset="0.1142" stop-color="#c4c4c7"/><stop offset="0.1189" stop-color="#bab9bb"/><stop offset="0.1252" stop-color="#acabad"/><stop offset="0.1315" stop-color="#a09e9f"/><stop offset="0.1377" stop-color="#949293"/><stop offset="0.1440" stop-color="#8a8788"/><stop offset="0.1502" stop-color="#807d7d"/><stop offset="0.1565" stop-color="#787473"/><stop offset="0.1628" stop-color="#706c6b"/><stop offset="0.1690" stop-color="#696563"/><stop offset="0.1753" stop-color="#635e5b"/><stop offset="0.1815" stop-color="#5d5855"/><stop offset="0.1878" stop-color="#58524f"/><stop offset="0.1941" stop-color="#544e49"/><stop offset="0.2003" stop-color="#504945"/><stop offset="0.2066" stop-color="#4d4640"/><stop offset="0.2144" stop-color="#4a423c"/><stop offset="0.2238" stop-color="#463e37"/><stop offset="0.2363" stop-color="#433a32"/><stop offset="0.2551" stop-color="#40362e"/><stop offset="0.2864" stop-color="#3e332a"/><stop offset="0.3490" stop-color="#3d3228"/><stop offset="1.0000" stop-color="#3d3228"/></linearGradient><linearGradient id="sk37" x1="0" y1="0" x2="0" y2="1"><stop offset="0.0000" stop-color="#b8bcc7"/><stop offset="0.0235" stop-color="#bcbfc9"/><stop offset="0.0469" stop-color="#c1c3cb"/><stop offset="0.0704" stop-color="#c6c7cd"/><stop offset="0.0892" stop-color="#cacbcf"/><stop offset="0.1017" stop-color="#cdcdd1"/><stop offset="0.1080" stop-color="#cfcfd2"/><stop offset="0.1111" stop-color="#cccccf"/><stop offset="0.1142" stop-color="#c4c4c7"/><stop offset="0.1189" stop-color="#bab9bb"/><stop offset="0.1252" stop-color="#acabad"/><stop offset="0.1315" stop-color="#a09fa0"/><stop offset="0.1377" stop-color="#959393"/><stop offset="0.1440" stop-color="#8a8888"/><stop offset="0.1502" stop-color="#817e7e"/><stop offset="0.1565" stop-color="#787574"/><stop offset="0.1628" stop-color="#716d6b"/><stop offset="0.1690" stop-color="#6a6563"/><stop offset="0.1753" stop-color="#635e5c"/><stop offset="0.1815" stop-color="#5e5855"/><stop offset="0.1878" stop-color="#59534f"/><stop offset="0.1941" stop-color="#554e4a"/><stop offset="0.2003" stop-color="#514a45"/><stop offset="0.2066" stop-color="#4e4641"/><stop offset="0.2144" stop-color="#4a423c"/><stop offset="0.2238" stop-color="#473e38"/><stop offset="0.2363" stop-color="#443a33"/><stop offset="0.2551" stop-color="#40362e"/><stop offset="0.2864" stop-color="#3e332a"/><stop offset="0.3490" stop-color="#3d3228"/><stop offset="1.0000" stop-color="#3d3228"/></linearGradient><linearGradient id="sk38" x1="0" y1="0" x2="0" y2="1"><stop offset="0.0000" stop-color="#b8bcc7"/><stop offset="0.0235" stop-color="#bcbfc9"/><stop offset="0.0469" stop-color="#c1c3cb"/><stop offset="0.0704" stop-color="#c6c7cd"/><stop offset="0.0892" stop-color="#cacbcf"/><stop offset="0.1017" stop-color="#cdcdd1"/><stop offset="0.1080" stop-color="#cfcfd2"/><stop offset="0.1111" stop-color="#cccccf"/><stop offset="0.1142" stop-color="#c5c4c7"/><stop offset="0.1189" stop-color="#bab9bc"/><stop offset="0.1252" stop-color="#adacad"/><stop offset="0.1315" stop-color="#a09fa0"/><stop offset="0.1377" stop-color="#959394"/><stop offset="0.1440" stop-color="#8b8989"/><stop offset="0.1502" stop-color="#817f7e"/><stop offset="0.1565" stop-color="#797675"/><stop offset="0.1628" stop-color="#716d6c"/><stop offset="0.1690" stop-color="#6a6664"/><stop offset="0.1753" stop-color="#645f5d"/><stop offset="0.1815" stop-color="#5e5956"/><stop offset="0.1878" stop-color="#595450"/><stop offset="0.1941" stop-color="#554f4b"/><stop offset="0.2003" stop-color="#514a46"/><stop offset="0.2066" stop-color="#4e4741"/><stop offset="0.2144" stop-color="#4b433d"/><stop offset="0.2238" stop-color="#473f38"/><stop offset="0.2363" stop-color="#443b33"/><stop offset="0.2551" stop-color="#41372e"/><stop offset="0.2864" stop-color="#3e342a"/><stop offset="0.3490" stop-color="#3d3228"/><stop offset="1.0000" stop-color="#3d3228"/></linearGradient><linearGradient id="sk39" x1="0" y1="0" x2="0" y2="1"><stop offset="0.0000" stop-color="#b8bcc7"/><stop offset="0.0235" stop-color="#bdc0c9"/><stop offset="0.0469" stop-color="#c1c3cb"/><stop offset="0.0704" stop-color="#c6c7cd"/><stop offset="0.0892" stop-color="#cacbcf"/><stop offset="0.1017" stop-color="#cdcdd1"/><stop offset="0.1080" stop-color="#cfcfd2"/><stop offset="0.1111" stop-color="#cccccf"/><stop offset="0.1142" stop-color="#c5c4c7"/><stop offset="0.1189" stop-color="#bababc"/><stop offset="0.1252" stop-color="#adacae"/><stop offset="0.1315" stop-color="#a19fa1"/><stop offset="0.1377" stop-color="#969495"/><stop offset="0.1440" stop-color="#8b8989"/><stop offset="0.1502" stop-color="#827f7f"/><stop offset="0.1565" stop-color="#7a7675"/><stop offset="0.1628" stop-color="#726e6d"/><stop offset="0.1690" stop-color="#6b6765"/><stop offset="0.1753" stop-color="#65605d"/><stop offset="0.1815" stop-color="#5f5a57"/><stop offset="0.1878" stop-color="#5a5451"/><stop offset="0.1941" stop-color="#564f4b"/><stop offset="0.2003" stop-color="#524b46"/><stop offset="0.2066" stop-color="#4e4742"/><stop offset="0.2144" stop-color="#4b433d"/><stop offset="0.2238" stop-color="#483f39"/><stop offset="0.2363" stop-color="#443b34"/><stop offset="0.2551" stop-color="#41372e"/><stop offset="0.2864" stop-color="#3e342a"/><stop offset="0.3490" stop-color="#3d3228"/><stop offset="1.0000" stop-color="#3d3228"/></linearGradient><linearGradient id="sk40" x1="0" y1="0" x2="0" y2="1"><stop offset="0.0000" stop-color="#b9bcc7"/><stop offset="0.0235" stop-color="#bdc0c9"/><stop offset="0.0469" stop-color="#c1c3cb"/><stop offset="0.0704" stop-color="#c6c7cd"/><stop offset="0.0892" stop-color="#cacbd0"/><stop offset="0.1017" stop-color="#cdcdd1"/><stop offset="0.1080" stop-color="#cfcfd2"/><stop offset="0.1111" stop-color="#cccccf"/><stop offset="0.1142" stop-color="#c5c4c7"/><stop offset="0.1189" stop-color="#bababc"/><stop offset="0.1252" stop-color="#adacae"/><stop offset="0.1315" stop-color="#a1a0a1"/><stop offset="0.1377" stop-color="#969495"/><stop offset="0.1440" stop-color="#8c8a8a"/><stop offset="0.1502" stop-color="#838080"/><stop offset="0.1565" stop-color="#7a7776"/><stop offset="0.1628" stop-color="#726f6e"/><stop offset="0.1690" stop-color="#6b6766"/><stop offset="0.1753" stop-color="#65615e"/><stop offset="0.1815" stop-color="#605a58"/><stop offset="0.1878" stop-color="#5b5552"/><stop offset="0.1941" stop-color="#56504c"/><stop offset="0.2003" stop-color="#524c47"/><stop offset="0.2066" stop-color="#4f4843"/><stop offset="0.2144" stop-color="#4b443e"/><stop offset="0.2238" stop-color="#484039"/><stop offset="0.2363" stop-color="#443b34"/><stop offset="0.2551" stop-color="#41372f"/><stop offset="0.2864" stop-color="#3e342a"/><stop offset="0.3490" stop-color="#3d3228"/><stop offset="1.0000" stop-color="#3d3228"/></linearGradient><linearGradient id="sk41" x1="0" y1="0" x2="0" y2="1"><stop offset="0.0000" stop-color="#b9bcc7"/><stop offset="0.0235" stop-color="#bdc0c9"/><stop offset="0.0469" stop-color="#c1c3cb"/><stop offset="0.0704" stop-color="#c6c7cd"/><stop offset="0.0892" stop-color="#cacbd0"/><stop offset="0.1017" stop-color="#cdcdd1"/><stop offset="0.1080" stop-color="#cfcfd2"/><stop offset="0.1111" stop-color="#cccccf"/><stop offset="0.1142" stop-color="#c5c5c7"/><stop offset="0.1189" stop-color="#bbbabc"/><stop offset="0.1252" stop-color="#aeadae"/><stop offset="0.1315" stop-color="#a2a0a2"/><stop offset="0.1377" stop-color="#979596"/><stop offset="0.1440" stop-color="#8d8a8b"/><stop offset="0.1502" stop-color="#838180"/><stop offset="0.1565" stop-color="#7b7877"/><stop offset="0.1628" stop-color="#73706e"/><stop offset="0.1690" stop-color="#6c6866"/><stop offset="0.1753" stop-color="#66615f"/><stop offset="0.1815" stop-color="#605b58"/><stop offset="0.1878" stop-color="#5b5652"/><stop offset="0.1941" stop-color="#57514d"/><stop offset="0.2003" stop-color="#534c48"/><stop offset="0.2066" stop-color="#504844"/><stop offset="0.2144" stop-color="#4c443f"/><stop offset="0.2238" stop-color="#48403a"/><stop offset="0.2363" stop-color="#453c35"/><stop offset="0.2551" stop-color="#41372f"/><stop offset="0.2864" stop-color="#3e342b"/><stop offset="0.3490" stop-color="#3d3228"/><stop offset="1.0000" stop-color="#3d3228"/></linearGradient><linearGradient id="sk42" x1="0" y1="0" x2="0" y2="1"><stop offset="0.0000" stop-color="#b9bdc7"/><stop offset="0.0235" stop-color="#bdc0c9"/><stop offset="0.0469" stop-color="#c1c4cb"/><stop offset="0.0704" stop-color="#c6c8ce"/><stop offset="0.0892" stop-color="#cacbd0"/><stop offset="0.1017" stop-color="#cdcdd1"/><stop offset="0.1080" stop-color="#cfcfd2"/><stop offset="0.1111" stop-color="#cccccf"/><stop offset="0.1142" stop-color="#c5c5c7"/><stop offset="0.1189" stop-color="#bbbabc"/><stop offset="0.1252" stop-color="#aeadaf"/><stop offset="0.1315" stop-color="#a2a1a2"/><stop offset="0.1377" stop-color="#979596"/><stop offset="0.1440" stop-color="#8d8b8b"/><stop offset="0.1502" stop-color="#848181"/><stop offset="0.1565" stop-color="#7c7878"/><stop offset="0.1628" stop-color="#74706f"/><stop offset="0.1690" stop-color="#6d6967"/><stop offset="0.1753" stop-color="#676260"/><stop offset="0.1815" stop-color="#615c59"/><stop offset="0.1878" stop-color="#5c5653"/><stop offset="0.1941" stop-color="#58514e"/><stop offset="0.2003" stop-color="#544d49"/><stop offset="0.2066" stop-color="#504944"/><stop offset="0.2144" stop-color="#4c453f"/><stop offset="0.2238" stop-color="#49413a"/><stop offset="0.2363" stop-color="#453c35"/><stop offset="0.2551" stop-color="#423830"/><stop offset="0.2864" stop-color="#3f342b"/><stop offset="0.3490" stop-color="#3d3228"/><stop offset="1.0000" stop-color="#3d3228"/></linearGradient><linearGradient id="sk43" x1="0" y1="0" x2="0" y2="1"><stop offset="0.0000" stop-color="#b9bdc7"/><stop offset="0.0235" stop-color="#bdc0c9"/><stop offset="0.0469" stop-color="#c2c4cb"/><stop offset="0.0704" stop-color="#c6c8ce"/><stop offset="0.0892" stop-color="#cacbd0"/><stop offset="0.1017" stop-color="#cdcdd1"/><stop offset="0.1080" stop-color="#cfcfd2"/><stop offset="0.1111" stop-color="#cccccf"/><stop offset="0.1142" stop-color="#c5c5c7"/><stop offset="0.1189" stop-color="#bbbabd"/><stop offset="0.1252" stop-color="#aeadaf"/><stop offset="0.1315" stop-color="#a3a1a3"/><stop offset="0.1377" stop-color="#989697"/><stop offset="0.1440" stop-color="#8e8c8c"/><stop offset="0.1502" stop-color="#858282"/><stop offset="0.1565" stop-color="#7c7979"/><stop offset="0.1628" stop-color="#757170"/><stop offset="0.1690" stop-color="#6e6a68"/><stop offset="0.1753" stop-color="#676361"/><stop offset="0.1815" stop-color="#625d5a"/><stop offset="0.1878" stop-color="#5d5754"/><stop offset="0.1941" stop-color="#58524f"/><stop offset="0.2003" stop-color="#544e4a"/><stop offset="0.2066" stop-color="#514a45"/><stop offset="0.2144" stop-color="#4d4640"/><stop offset="0.2238" stop-color="#49413b"/><stop offset="0.2363" stop-color="#463d36"/><stop offset="0.2551" stop-color="#423830"/><stop offset="0.2864" stop-color="#3f342b"/><stop offset="0.3490" stop-color="#3d3228"/><stop offset="1.0000" stop-color="#3d3228"/></linearGradient><linearGradient id="sk44" x1="0" y1="0" x2="0" y2="1"><stop offset="0.0000" stop-color="#b9bdc7"/><stop offset="0.0235" stop-color="#bdc0c9"/><stop offset="0.0469" stop-color="#c2c4cb"/><stop offset="0.0704" stop-color="#c6c8ce"/><stop offset="0.0892" stop-color="#cacbd0"/><stop offset="0.1017" stop-color="#cdcdd1"/><stop offset="0.1080" stop-color="#cfcfd2"/><stop offset="0.1111" stop-color="#cccccf"/><stop offset="0.1142" stop-color="#c5c5c8"/><stop offset="0.1189" stop-color="#bbbbbd"/><stop offset="0.1252" stop-color="#afaeb0"/><stop offset="0.1315" stop-color="#a3a2a3"/><stop offset="0.1377" stop-color="#989797"/><stop offset="0.1440" stop-color="#8e8c8d"/><stop offset="0.1502" stop-color="#858383"/><stop offset="0.1565" stop-color="#7d7a79"/><stop offset="0.1628" stop-color="#757271"/><stop offset="0.1690" stop-color="#6e6a69"/><stop offset="0.1753" stop-color="#686462"/><stop offset="0.1815" stop-color="#635e5b"/><stop offset="0.1878" stop-color="#5d5855"/><stop offset="0.1941" stop-color="#59534f"/><stop offset="0.2003" stop-color="#554f4a"/><stop offset="0.2066" stop-color="#514b46"/><stop offset="0.2144" stop-color="#4e4641"/><stop offset="0.2238" stop-color="#4a423c"/><stop offset="0.2363" stop-color="#463d36"/><stop offset="0.2551" stop-color="#423831"/><stop offset="0.2864" stop-color="#3f342b"/><stop offset="0.3490" stop-color="#3d3228"/><stop offset="1.0000" stop-color="#3d3228"/></linearGradient><linearGradient id="sk45" x1="0" y1="0" x2="0" y2="1"><stop offset="0.0000" stop-color="#babdc7"/><stop offset="0.0235" stop-color="#bec0c9"/><stop offset="0.0469" stop-color="#c2c4cb"/><stop offset="0.0704" stop-color="#c6c8ce"/><stop offset="0.0892" stop-color="#cacbd0"/><stop offset="0.1017" stop-color="#cdcdd1"/><stop offset="0.1080" stop-color="#cfcfd2"/><stop offset="0.1111" stop-color="#cccccf"/><stop offset="0.1142" stop-color="#c5c5c8"/><stop offset="0.1189" stop-color="#bbbbbd"/><stop offset="0.1252" stop-color="#afaeb0"/><stop offset="0.1315" stop-color="#a4a2a4"/><stop offset="0.1377" stop-color="#999798"/><stop offset="0.1440" stop-color="#8f8d8d"/><stop offset="0.1502" stop-color="#868383"/><stop offset="0.1565" stop-color="#7e7b7a"/><stop offset="0.1628" stop-color="#767372"/><stop offset="0.1690" stop-color="#6f6b6a"/><stop offset="0.1753" stop-color="#696563"/><stop offset="0.1815" stop-color="#635e5c"/><stop offset="0.1878" stop-color="#5e5956"/><stop offset="0.1941" stop-color="#5a5450"/><stop offset="0.2003" stop-color="#564f4b"/><stop offset="0.2066" stop-color="#524b47"/><stop offset="0.2144" stop-color="#4e4742"/><stop offset="0.2238" stop-color="#4a423d"/><stop offset="0.2363" stop-color="#463e37"/><stop offset="0.2551" stop-color="#423931"/><stop offset="0.2864" stop-color="#3f352c"/><stop offset="0.3490" stop-color="#3d3228"/><stop offset="1.0000" stop-color="#3d3228"/></linearGradient><linearGradient id="sk46" x1="0" y1="0" x2="0" y2="1"><stop offset="0.0000" stop-color="#babdc7"/><stop offset="0.0235" stop-color="#bec1c9"/><stop offset="0.0469" stop-color="#c2c4cb"/><stop offset="0.0704" stop-color="#c7c8ce"/><stop offset="0.0892" stop-color="#cacbd0"/><stop offset="0.1017" stop-color="#cdcdd1"/><stop offset="0.1080" stop-color="#cfcfd2"/><stop offset="0.1111" stop-color="#cccccf"/><stop offset="0.1142" stop-color="#c5c5c8"/><stop offset="0.1189" stop-color="#bcbbbd"/><stop offset="0.1252" stop-color="#afaeb0"/><stop offset="0.1315" stop-color="#a4a3a4"/><stop offset="0.1377" stop-color="#999899"/><stop offset="0.1440" stop-color="#908e8e"/><stop offset="0.1502" stop-color="#878484"/><stop offset="0.1565" stop-color="#7f7c7b"/><stop offset="0.1628" stop-color="#777473"/><stop offset="0.1690" stop-color="#706c6b"/><stop offset="0.1753" stop-color="#6a6664"/><stop offset="0.1815" stop-color="#645f5d"/><stop offset="0.1878" stop-color="#5f5a57"/><stop offset="0.1941" stop-color="#5a5551"/><stop offset="0.2003" stop-color="#56504c"/><stop offset="0.2066" stop-color="#534c48"/><stop offset="0.2144" stop-color="#4f4843"/><stop offset="0.2238" stop-color="#4b433d"/><stop offset="0.2363" stop-color="#473e38"/><stop offset="0.2551" stop-color="#433932"/><stop offset="0.2864" stop-color="#3f352c"/><stop offset="0.3490" stop-color="#3d3228"/><stop offset="1.0000" stop-color="#3d3228"/></linearGradient><linearGradient id="sk47" x1="0" y1="0" x2="0" y2="1"><stop offset="0.0000" stop-color="#babdc8"/><stop offset="0.0235" stop-color="#bec1c9"/><stop offset="0.0469" stop-color="#c2c4cc"/><stop offset="0.0704" stop-color="#c7c8ce"/><stop offset="0.0892" stop-color="#cbcbd0"/><stop offset="0.1017" stop-color="#cdcdd1"/><stop offset="0.1080" stop-color="#cfcfd2"/><stop offset="0.1111" stop-color="#cccccf"/><stop offset="0.1142" stop-color="#c6c5c8"/><stop offset="0.1189" stop-color="#bcbbbe"/><stop offset="0.1252" stop-color="#b0afb1"/><stop offset="0.1315" stop-color="#a4a3a5"/><stop offset="0.1377" stop-color="#9a9899"/><stop offset="0.1440" stop-color="#908e8f"/><stop offset="0.1502" stop-color="#878585"/><stop offset="0.1565" stop-color="#7f7c7c"/><stop offset="0.1628" stop-color="#787474"/><stop offset="0.1690" stop-color="#716d6c"/><stop offset="0.1753" stop-color="#6b6665"/><stop offset="0.1815" stop-color="#65605e"/><stop offset="0.1878" stop-color="#605b58"/><stop offset="0.1941" stop-color="#5b5652"/><stop offset="0.2003" stop-color="#57514d"/><stop offset="0.2066" stop-color="#544d49"/><stop offset="0.2144" stop-color="#504844"/><stop offset="0.2238" stop-color="#4c443e"/><stop offset="0.2363" stop-color="#473f38"/><stop offset="0.2551" stop-color="#433a32"/><stop offset="0.2864" stop-color="#3f352c"/><stop offset="0.3490" stop-color="#3d3229"/><stop offset="1.0000" stop-color="#3d3228"/></linearGradient><linearGradient id="sk48" x1="0" y1="0" x2="0" y2="1"><stop offset="0.0000" stop-color="#babec8"/><stop offset="0.0235" stop-color="#bec1ca"/><stop offset="0.0469" stop-color="#c2c4cc"/><stop offset="0.0704" stop-color="#c7c8ce"/><stop offset="0.0892" stop-color="#cbcbd0"/><stop offset="0.1017" stop-color="#cdcdd1"/><stop offset="0.1080" stop-color="#cfcfd2"/><stop offset="0.1111" stop-color="#cccccf"/><stop offset="0.1142" stop-color="#c6c5c8"/><stop offset="0.1189" stop-color="#bcbcbe"/><stop offset="0.1252" stop-color="#b0afb1"/><stop offset="0.1315" stop-color="#a5a4a5"/><stop offset="0.1377" stop-color="#9b999a"/><stop offset="0.1440" stop-color="#918f90"/><stop offset="0.1502" stop-color="#888686"/><stop offset="0.1565" stop-color="#807d7d"/><stop offset="0.1628" stop-color="#797574"/><stop offset="0.1690" stop-color="#726e6d"/><stop offset="0.1753" stop-color="#6b6766"/><stop offset="0.1815" stop-color="#66615f"/><stop offset="0.1878" stop-color="#615c59"/><stop offset="0.1941" stop-color="#5c5753"/><stop offset="0.2003" stop-color="#58524e"/><stop offset="0.2066" stop-color="#544e4a"/><stop offset="0.2144" stop-color="#504944"/><stop offset="0.2238" stop-color="#4c453f"/><stop offset="0.2363" stop-color="#484039"/><stop offset="0.2551" stop-color="#433a33"/><stop offset="0.2864" stop-color="#40352c"/><stop offset="0.3490" stop-color="#3d3229"/><stop offset="1.0000" stop-color="#3d3228"/></linearGradient><linearGradient id="sk49" x1="0" y1="0" x2="0" y2="1"><stop offset="0.0000" stop-color="#bbbec8"/><stop offset="0.0235" stop-color="#bec1ca"/><stop offset="0.0469" stop-color="#c2c4cc"/><stop offset="0.0704" stop-color="#c7c8ce"/><stop offset="0.0892" stop-color="#cbcbd0"/><stop offset="0.1017" stop-color="#cdced1"/><stop offset="0.1080" stop-color="#cfcfd2"/><stop offset="0.1111" stop-color="#cccccf"/><stop offset="0.1142" stop-color="#c6c6c8"/><stop offset="0.1189" stop-color="#bcbcbe"/><stop offset="0.1252" stop-color="#b1b0b2"/><stop offset="0.1315" stop-color="#a5a4a6"/><stop offset="0.1377" stop-color="#9b9a9b"/><stop offset="0.1440" stop-color="#929090"/><stop offset="0.1502" stop-color="#898787"/><stop offset="0.1565" stop-color="#817e7e"/><stop offset="0.1628" stop-color="#797675"/><stop offset="0.1690" stop-color="#736f6e"/><stop offset="0.1753" stop-color="#6c6867"/><stop offset="0.1815" stop-color="#676260"/><stop offset="0.1878" stop-color="#625d5a"/><stop offset="0.1941" stop-color="#5d5754"/><stop offset="0.2003" stop-color="#59534f"/><stop offset="0.2066" stop-color="#554f4b"/><stop offset="0.2144" stop-color="#514a45"/><stop offset="0.2238" stop-color="#4d4540"/><stop offset="0.2363" stop-color="#48403a"/><stop offset="0.2551" stop-color="#443b33"/><stop offset="0.2864" stop-color="#40362d"/><stop offset="0.3490" stop-color="#3d3229"/><stop offset="1.0000" stop-color="#3d3228"/></linearGradient><linearGradient id="fg0" gradientUnits="userSpaceOnUse" x1="0" y1="88" x2="0" y2="208"><stop offset="0.000" stop-color="#fff" stop-opacity="0.000"/><stop offset="0.050" stop-color="#fff" stop-opacity="0.000"/><stop offset="0.100" stop-color="#fff" stop-opacity="0.000"/><stop offset="0.150" stop-color="#fff" stop-opacity="0.000"/><stop offset="0.200" stop-color="#fff" stop-opacity="0.000"/><stop offset="0.250" stop-color="#fff" stop-opacity="0.000"/><stop offset="0.300" stop-color="#fff" stop-opacity="0.011"/><stop offset="0.350" stop-color="#fff" stop-opacity="0.041"/><stop offset="0.400" stop-color="#fff" stop-opacity="0.086"/><stop offset="0.450" stop-color="#fff" stop-opacity="0.146"/><stop offset="0.500" stop-color="#fff" stop-opacity="0.216"/><stop offset="0.550" stop-color="#fff" stop-opacity="0.296"/><stop offset="0.600" stop-color="#fff" stop-opacity="0.381"/><stop offset="0.650" stop-color="#fff" stop-opacity="0.471"/><stop offset="0.700" stop-color="#fff" stop-opacity="0.562"/><stop offset="0.750" stop-color="#fff" stop-opacity="0.651"/><stop offset="0.800" stop-color="#fff" stop-opacity="0.736"/><stop offset="0.850" stop-color="#fff" stop-opacity="0.814"/><stop offset="0.900" stop-color="#fff" stop-opacity="0.882"/><stop offset="0.950" stop-color="#fff" stop-opacity="0.937"/><stop offset="1.000" stop-color="#fff" stop-opacity="0.977"/></linearGradient><linearGradient id="fg1" gradientUnits="userSpaceOnUse" x1="0" y1="88" x2="0" y2="208"><stop offset="0.000" stop-color="#fff" stop-opacity="0.000"/><stop offset="0.050" stop-color="#fff" stop-opacity="0.000"/><stop offset="0.100" stop-color="#fff" stop-opacity="0.000"/><stop offset="0.150" stop-color="#fff" stop-opacity="0.000"/><stop offset="0.200" stop-color="#fff" stop-opacity="0.000"/><stop offset="0.250" stop-color="#fff" stop-opacity="0.002"/><stop offset="0.300" stop-color="#fff" stop-opacity="0.021"/><stop offset="0.350" stop-color="#fff" stop-opacity="0.059"/><stop offset="0.400" stop-color="#fff" stop-opacity="0.113"/><stop offset="0.450" stop-color="#fff" stop-opacity="0.181"/><stop offset="0.500" stop-color="#fff" stop-opacity="0.260"/><stop offset="0.550" stop-color="#fff" stop-opacity="0.348"/><stop offset="0.600" stop-color="#fff" stop-opacity="0.440"/><stop offset="0.650" stop-color="#fff" stop-opacity="0.535"/><stop offset="0.700" stop-color="#fff" stop-opacity="0.630"/><stop offset="0.750" stop-color="#fff" stop-opacity="0.720"/><stop offset="0.800" stop-color="#fff" stop-opacity="0.803"/><stop offset="0.850" stop-color="#fff" stop-opacity="0.876"/><stop offset="0.900" stop-color="#fff" stop-opacity="0.935"/><stop offset="0.950" stop-color="#fff" stop-opacity="0.977"/><stop offset="1.000" stop-color="#fff" stop-opacity="0.998"/></linearGradient><linearGradient id="fg2" gradientUnits="userSpaceOnUse" x1="0" y1="88" x2="0" y2="208"><stop offset="0.000" stop-color="#fff" stop-opacity="0.000"/><stop offset="0.050" stop-color="#fff" stop-opacity="0.000"/><stop offset="0.100" stop-color="#fff" stop-opacity="0.000"/><stop offset="0.150" stop-color="#fff" stop-opacity="0.000"/><stop offset="0.200" stop-color="#fff" stop-opacity="0.000"/><stop offset="0.250" stop-color="#fff" stop-opacity="0.006"/><stop offset="0.300" stop-color="#fff" stop-opacity="0.032"/><stop offset="0.350" stop-color="#fff" stop-opacity="0.079"/><stop offset="0.400" stop-color="#fff" stop-opacity="0.142"/><stop offset="0.450" stop-color="#fff" stop-opacity="0.218"/><stop offset="0.500" stop-color="#fff" stop-opacity="0.305"/><stop offset="0.550" stop-color="#fff" stop-opacity="0.400"/><stop offset="0.600" stop-color="#fff" stop-opacity="0.499"/><stop offset="0.650" stop-color="#fff" stop-opacity="0.598"/><stop offset="0.700" stop-color="#fff" stop-opacity="0.694"/><stop offset="0.750" stop-color="#fff" stop-opacity="0.783"/><stop offset="0.800" stop-color="#fff" stop-opacity="0.862"/><stop offset="0.850" stop-color="#fff" stop-opacity="0.926"/><stop offset="0.900" stop-color="#fff" stop-opacity="0.973"/><stop offset="0.950" stop-color="#fff" stop-opacity="0.997"/><stop offset="1.000" stop-color="#fff" stop-opacity="1.000"/></linearGradient><linearGradient id="fg3" gradientUnits="userSpaceOnUse" x1="0" y1="88" x2="0" y2="208"><stop offset="0.000" stop-color="#fff" stop-opacity="0.000"/><stop offset="0.050" stop-color="#fff" stop-opacity="0.000"/><stop offset="0.100" stop-color="#fff" stop-opacity="0.000"/><stop offset="0.150" stop-color="#fff" stop-opacity="0.000"/><stop offset="0.200" stop-color="#fff" stop-opacity="0.000"/><stop offset="0.250" stop-color="#fff" stop-opacity="0.011"/><stop offset="0.300" stop-color="#fff" stop-opacity="0.045"/><stop offset="0.350" stop-color="#fff" stop-opacity="0.099"/><stop offset="0.400" stop-color="#fff" stop-opacity="0.170"/><stop offset="0.450" stop-color="#fff" stop-opacity="0.255"/><stop offset="0.500" stop-color="#fff" stop-opacity="0.349"/><stop offset="0.550" stop-color="#fff" stop-opacity="0.450"/><stop offset="0.600" stop-color="#fff" stop-opacity="0.553"/><stop offset="0.650" stop-color="#fff" stop-opacity="0.655"/><stop offset="0.700" stop-color="#fff" stop-opacity="0.751"/><stop offset="0.750" stop-color="#fff" stop-opacity="0.837"/><stop offset="0.800" stop-color="#fff" stop-opacity="0.910"/><stop offset="0.850" stop-color="#fff" stop-opacity="0.963"/><stop offset="0.900" stop-color="#fff" stop-opacity="0.994"/><stop offset="0.950" stop-color="#fff" stop-opacity="1.000"/><stop offset="1.000" stop-color="#fff" stop-opacity="1.000"/></linearGradient><linearGradient id="fg4" gradientUnits="userSpaceOnUse" x1="0" y1="88" x2="0" y2="208"><stop offset="0.000" stop-color="#fff" stop-opacity="0.000"/><stop offset="0.050" stop-color="#fff" stop-opacity="0.000"/><stop offset="0.100" stop-color="#fff" stop-opacity="0.000"/><stop offset="0.150" stop-color="#fff" stop-opacity="0.000"/><stop offset="0.200" stop-color="#fff" stop-opacity="0.000"/><stop offset="0.250" stop-color="#fff" stop-opacity="0.017"/><stop offset="0.300" stop-color="#fff" stop-opacity="0.058"/><stop offset="0.350" stop-color="#fff" stop-opacity="0.119"/><stop offset="0.400" stop-color="#fff" stop-opacity="0.198"/><stop offset="0.450" stop-color="#fff" stop-opacity="0.289"/><stop offset="0.500" stop-color="#fff" stop-opacity="0.390"/><stop offset="0.550" stop-color="#fff" stop-opacity="0.495"/><stop offset="0.600" stop-color="#fff" stop-opacity="0.602"/><stop offset="0.650" stop-color="#fff" stop-opacity="0.704"/><stop offset="0.700" stop-color="#fff" stop-opacity="0.799"/><stop offset="0.750" stop-color="#fff" stop-opacity="0.881"/><stop offset="0.800" stop-color="#fff" stop-opacity="0.945"/><stop offset="0.850" stop-color="#fff" stop-opacity="0.986"/><stop offset="0.900" stop-color="#fff" stop-opacity="1.000"/><stop offset="0.950" stop-color="#fff" stop-opacity="1.000"/><stop offset="1.000" stop-color="#fff" stop-opacity="1.000"/></linearGradient><linearGradient id="fg5" gradientUnits="userSpaceOnUse" x1="0" y1="88" x2="0" y2="208"><stop offset="0.000" stop-color="#fff" stop-opacity="0.000"/><stop offset="0.050" stop-color="#fff" stop-opacity="0.000"/><stop offset="0.100" stop-color="#fff" stop-opacity="0.000"/><stop offset="0.150" stop-color="#fff" stop-opacity="0.000"/><stop offset="0.200" stop-color="#fff" stop-opacity="0.001"/><stop offset="0.250" stop-color="#fff" stop-opacity="0.023"/><stop offset="0.300" stop-color="#fff" stop-opacity="0.070"/><stop offset="0.350" stop-color="#fff" stop-opacity="0.137"/><stop offset="0.400" stop-color="#fff" stop-opacity="0.221"/><stop offset="0.450" stop-color="#fff" stop-opacity="0.318"/><stop offset="0.500" stop-color="#fff" stop-opacity="0.423"/><stop offset="0.550" stop-color="#fff" stop-opacity="0.532"/><stop offset="0.600" stop-color="#fff" stop-opacity="0.641"/><stop offset="0.650" stop-color="#fff" stop-opacity="0.743"/><stop offset="0.700" stop-color="#fff" stop-opacity="0.836"/><stop offset="0.750" stop-color="#fff" stop-opacity="0.912"/><stop offset="0.800" stop-color="#fff" stop-opacity="0.968"/><stop offset="0.850" stop-color="#fff" stop-opacity="0.997"/><stop offset="0.900" stop-color="#fff" stop-opacity="1.000"/><stop offset="0.950" stop-color="#fff" stop-opacity="1.000"/><stop offset="1.000" stop-color="#fff" stop-opacity="1.000"/></linearGradient><linearGradient id="fg6" gradientUnits="userSpaceOnUse" x1="0" y1="88" x2="0" y2="208"><stop offset="0.000" stop-color="#fff" stop-opacity="0.000"/><stop offset="0.050" stop-color="#fff" stop-opacity="0.000"/><stop offset="0.100" stop-color="#fff" stop-opacity="0.000"/><stop offset="0.150" stop-color="#fff" stop-opacity="0.000"/><stop offset="0.200" stop-color="#fff" stop-opacity="0.002"/><stop offset="0.250" stop-color="#fff" stop-opacity="0.028"/><stop offset="0.300" stop-color="#fff" stop-opacity="0.078"/><stop offset="0.350" stop-color="#fff" stop-opacity="0.150"/><stop offset="0.400" stop-color="#fff" stop-opacity="0.238"/><stop offset="0.450" stop-color="#fff" stop-opacity="0.338"/><stop offset="0.500" stop-color="#fff" stop-opacity="0.447"/><stop offset="0.550" stop-color="#fff" stop-opacity="0.558"/><stop offset="0.600" stop-color="#fff" stop-opacity="0.668"/><stop offset="0.650" stop-color="#fff" stop-opacity="0.770"/><stop offset="0.700" stop-color="#fff" stop-opacity="0.860"/><stop offset="0.750" stop-color="#fff" stop-opacity="0.932"/><stop offset="0.800" stop-color="#fff" stop-opacity="0.981"/><stop offset="0.850" stop-color="#fff" stop-opacity="1.000"/><stop offset="0.900" stop-color="#fff" stop-opacity="1.000"/><stop offset="0.950" stop-color="#fff" stop-opacity="1.000"/><stop offset="1.000" stop-color="#fff" stop-opacity="1.000"/></linearGradient><linearGradient id="fg7" gradientUnits="userSpaceOnUse" x1="0" y1="88" x2="0" y2="208"><stop offset="0.000" stop-color="#fff" stop-opacity="0.000"/><stop offset="0.050" stop-color="#fff" stop-opacity="0.000"/><stop offset="0.100" stop-color="#fff" stop-opacity="0.000"/><stop offset="0.150" stop-color="#fff" stop-opacity="0.000"/><stop offset="0.200" stop-color="#fff" stop-opacity="0.003"/><stop offset="0.250" stop-color="#fff" stop-opacity="0.031"/><stop offset="0.300" stop-color="#fff" stop-opacity="0.083"/><stop offset="0.350" stop-color="#fff" stop-opacity="0.157"/><stop offset="0.400" stop-color="#fff" stop-opacity="0.247"/><stop offset="0.450" stop-color="#fff" stop-opacity="0.349"/><stop offset="0.500" stop-color="#fff" stop-opacity="0.459"/><stop offset="0.550" stop-color="#fff" stop-opacity="0.572"/><stop offset="0.600" stop-color="#fff" stop-opacity="0.682"/><stop offset="0.650" stop-color="#fff" stop-opacity="0.784"/><stop offset="0.700" stop-color="#fff" stop-opacity="0.872"/><stop offset="0.750" stop-color="#fff" stop-opacity="0.942"/><stop offset="0.800" stop-color="#fff" stop-opacity="0.986"/><stop offset="0.850" stop-color="#fff" stop-opacity="1.000"/><stop offset="0.900" stop-color="#fff" stop-opacity="1.000"/><stop offset="0.950" stop-color="#fff" stop-opacity="1.000"/><stop offset="1.000" stop-color="#fff" stop-opacity="1.000"/></linearGradient><linearGradient id="fg8" gradientUnits="userSpaceOnUse" x1="0" y1="88" x2="0" y2="208"><stop offset="0.000" stop-color="#fff" stop-opacity="0.000"/><stop offset="0.050" stop-color="#fff" stop-opacity="0.000"/><stop offset="0.100" stop-color="#fff" stop-opacity="0.000"/><stop offset="0.150" stop-color="#fff" stop-opacity="0.000"/><stop offset="0.200" stop-color="#fff" stop-opacity="0.003"/><stop offset="0.250" stop-color="#fff" stop-opacity="0.031"/><stop offset="0.300" stop-color="#fff" stop-opacity="0.083"/><stop offset="0.350" stop-color="#fff" stop-opacity="0.157"/><stop offset="0.400" stop-color="#fff" stop-opacity="0.247"/><stop offset="0.450" stop-color="#fff" stop-opacity="0.349"/><stop offset="0.500" stop-color="#fff" stop-opacity="0.459"/><stop offset="0.550" stop-color="#fff" stop-opacity="0.572"/><stop offset="0.600" stop-color="#fff" stop-opacity="0.682"/><stop offset="0.650" stop-color="#fff" stop-opacity="0.784"/><stop offset="0.700" stop-color="#fff" stop-opacity="0.872"/><stop offset="0.750" stop-color="#fff" stop-opacity="0.942"/><stop offset="0.800" stop-color="#fff" stop-opacity="0.986"/><stop offset="0.850" stop-color="#fff" stop-opacity="1.000"/><stop offset="0.900" stop-color="#fff" stop-opacity="1.000"/><stop offset="0.950" stop-color="#fff" stop-opacity="1.000"/><stop offset="1.000" stop-color="#fff" stop-opacity="1.000"/></linearGradient><linearGradient id="fg9" gradientUnits="userSpaceOnUse" x1="0" y1="88" x2="0" y2="208"><stop offset="0.000" stop-color="#fff" stop-opacity="0.000"/><stop offset="0.050" stop-color="#fff" stop-opacity="0.000"/><stop offset="0.100" stop-color="#fff" stop-opacity="0.000"/><stop offset="0.150" stop-color="#fff" stop-opacity="0.000"/><stop offset="0.200" stop-color="#fff" stop-opacity="0.002"/><stop offset="0.250" stop-color="#fff" stop-opacity="0.028"/><stop offset="0.300" stop-color="#fff" stop-opacity="0.078"/><stop offset="0.350" stop-color="#fff" stop-opacity="0.150"/><stop offset="0.400" stop-color="#fff" stop-opacity="0.238"/><stop offset="0.450" stop-color="#fff" stop-opacity="0.338"/><stop offset="0.500" stop-color="#fff" stop-opacity="0.447"/><stop offset="0.550" stop-color="#fff" stop-opacity="0.558"/><stop offset="0.600" stop-color="#fff" stop-opacity="0.668"/><stop offset="0.650" stop-color="#fff" stop-opacity="0.770"/><stop offset="0.700" stop-color="#fff" stop-opacity="0.860"/><stop offset="0.750" stop-color="#fff" stop-opacity="0.932"/><stop offset="0.800" stop-color="#fff" stop-opacity="0.981"/><stop offset="0.850" stop-color="#fff" stop-opacity="1.000"/><stop offset="0.900" stop-color="#fff" stop-opacity="1.000"/><stop offset="0.950" stop-color="#fff" stop-opacity="1.000"/><stop offset="1.000" stop-color="#fff" stop-opacity="1.000"/></linearGradient><linearGradient id="fg10" gradientUnits="userSpaceOnUse" x1="0" y1="88" x2="0" y2="208"><stop offset="0.000" stop-color="#fff" stop-opacity="0.000"/><stop offset="0.050" stop-color="#fff" stop-opacity="0.000"/><stop offset="0.100" stop-color="#fff" stop-opacity="0.000"/><stop offset="0.150" stop-color="#fff" stop-opacity="0.000"/><stop offset="0.200" stop-color="#fff" stop-opacity="0.001"/><stop offset="0.250" stop-color="#fff" stop-opacity="0.023"/><stop offset="0.300" stop-color="#fff" stop-opacity="0.070"/><stop offset="0.350" stop-color="#fff" stop-opacity="0.137"/><stop offset="0.400" stop-color="#fff" stop-opacity="0.221"/><stop offset="0.450" stop-color="#fff" stop-opacity="0.318"/><stop offset="0.500" stop-color="#fff" stop-opacity="0.423"/><stop offset="0.550" stop-color="#fff" stop-opacity="0.532"/><stop offset="0.600" stop-color="#fff" stop-opacity="0.641"/><stop offset="0.650" stop-color="#fff" stop-opacity="0.743"/><stop offset="0.700" stop-color="#fff" stop-opacity="0.836"/><stop offset="0.750" stop-color="#fff" stop-opacity="0.912"/><stop offset="0.800" stop-color="#fff" stop-opacity="0.968"/><stop offset="0.850" stop-color="#fff" stop-opacity="0.997"/><stop offset="0.900" stop-color="#fff" stop-opacity="1.000"/><stop offset="0.950" stop-color="#fff" stop-opacity="1.000"/><stop offset="1.000" stop-color="#fff" stop-opacity="1.000"/></linearGradient><linearGradient id="fg11" gradientUnits="userSpaceOnUse" x1="0" y1="88" x2="0" y2="208"><stop offset="0.000" stop-color="#fff" stop-opacity="0.000"/><stop offset="0.050" stop-color="#fff" stop-opacity="0.000"/><stop offset="0.100" stop-color="#fff" stop-opacity="0.000"/><stop offset="0.150" stop-color="#fff" stop-opacity="0.000"/><stop offset="0.200" stop-color="#fff" stop-opacity="0.000"/><stop offset="0.250" stop-color="#fff" stop-opacity="0.017"/><stop offset="0.300" stop-color="#fff" stop-opacity="0.058"/><stop offset="0.350" stop-color="#fff" stop-opacity="0.119"/><stop offset="0.400" stop-color="#fff" stop-opacity="0.198"/><stop offset="0.450" stop-color="#fff" stop-opacity="0.289"/><stop offset="0.500" stop-color="#fff" stop-opacity="0.390"/><stop offset="0.550" stop-color="#fff" stop-opacity="0.495"/><stop offset="0.600" stop-color="#fff" stop-opacity="0.602"/><stop offset="0.650" stop-color="#fff" stop-opacity="0.704"/><stop offset="0.700" stop-color="#fff" stop-opacity="0.799"/><stop offset="0.750" stop-color="#fff" stop-opacity="0.881"/><stop offset="0.800" stop-color="#fff" stop-opacity="0.945"/><stop offset="0.850" stop-color="#fff" stop-opacity="0.986"/><stop offset="0.900" stop-color="#fff" stop-opacity="1.000"/><stop offset="0.950" stop-color="#fff" stop-opacity="1.000"/><stop offset="1.000" stop-color="#fff" stop-opacity="1.000"/></linearGradient><linearGradient id="fg12" gradientUnits="userSpaceOnUse" x1="0" y1="88" x2="0" y2="208"><stop offset="0.000" stop-color="#fff" stop-opacity="0.000"/><stop offset="0.050" stop-color="#fff" stop-opacity="0.000"/><stop offset="0.100" stop-color="#fff" stop-opacity="0.000"/><stop offset="0.150" stop-color="#fff" stop-opacity="0.000"/><stop offset="0.200" stop-color="#fff" stop-opacity="0.000"/><stop offset="0.250" stop-color="#fff" stop-opacity="0.011"/><stop offset="0.300" stop-color="#fff" stop-opacity="0.045"/><stop offset="0.350" stop-color="#fff" stop-opacity="0.099"/><stop offset="0.400" stop-color="#fff" stop-opacity="0.170"/><stop offset="0.450" stop-color="#fff" stop-opacity="0.255"/><stop offset="0.500" stop-color="#fff" stop-opacity="0.349"/><stop offset="0.550" stop-color="#fff" stop-opacity="0.450"/><stop offset="0.600" stop-color="#fff" stop-opacity="0.553"/><stop offset="0.650" stop-color="#fff" stop-opacity="0.655"/><stop offset="0.700" stop-color="#fff" stop-opacity="0.751"/><stop offset="0.750" stop-color="#fff" stop-opacity="0.837"/><stop offset="0.800" stop-color="#fff" stop-opacity="0.910"/><stop offset="0.850" stop-color="#fff" stop-opacity="0.963"/><stop offset="0.900" stop-color="#fff" stop-opacity="0.994"/><stop offset="0.950" stop-color="#fff" stop-opacity="1.000"/><stop offset="1.000" stop-color="#fff" stop-opacity="1.000"/></linearGradient><linearGradient id="fg13" gradientUnits="userSpaceOnUse" x1="0" y1="88" x2="0" y2="208"><stop offset="0.000" stop-color="#fff" stop-opacity="0.000"/><stop offset="0.050" stop-color="#fff" stop-opacity="0.000"/><stop offset="0.100" stop-color="#fff" stop-opacity="0.000"/><stop offset="0.150" stop-color="#fff" stop-opacity="0.000"/><stop offset="0.200" stop-color="#fff" stop-opacity="0.000"/><stop offset="0.250" stop-color="#fff" stop-opacity="0.006"/><stop offset="0.300" stop-color="#fff" stop-opacity="0.032"/><stop offset="0.350" stop-color="#fff" stop-opacity="0.079"/><stop offset="0.400" stop-color="#fff" stop-opacity="0.142"/><stop offset="0.450" stop-color="#fff" stop-opacity="0.218"/><stop offset="0.500" stop-color="#fff" stop-opacity="0.305"/><stop offset="0.550" stop-color="#fff" stop-opacity="0.400"/><stop offset="0.600" stop-color="#fff" stop-opacity="0.499"/><stop offset="0.650" stop-color="#fff" stop-opacity="0.598"/><stop offset="0.700" stop-color="#fff" stop-opacity="0.694"/><stop offset="0.750" stop-color="#fff" stop-opacity="0.783"/><stop offset="0.800" stop-color="#fff" stop-opacity="0.862"/><stop offset="0.850" stop-color="#fff" stop-opacity="0.926"/><stop offset="0.900" stop-color="#fff" stop-opacity="0.973"/><stop offset="0.950" stop-color="#fff" stop-opacity="0.997"/><stop offset="1.000" stop-color="#fff" stop-opacity="1.000"/></linearGradient><linearGradient id="fg14" gradientUnits="userSpaceOnUse" x1="0" y1="88" x2="0" y2="208"><stop offset="0.000" stop-color="#fff" stop-opacity="0.000"/><stop offset="0.050" stop-color="#fff" stop-opacity="0.000"/><stop offset="0.100" stop-color="#fff" stop-opacity="0.000"/><stop offset="0.150" stop-color="#fff" stop-opacity="0.000"/><stop offset="0.200" stop-color="#fff" stop-opacity="0.000"/><stop offset="0.250" stop-color="#fff" stop-opacity="0.002"/><stop offset="0.300" stop-color="#fff" stop-opacity="0.021"/><stop offset="0.350" stop-color="#fff" stop-opacity="0.059"/><stop offset="0.400" stop-color="#fff" stop-opacity="0.113"/><stop offset="0.450" stop-color="#fff" stop-opacity="0.181"/><stop offset="0.500" stop-color="#fff" stop-opacity="0.260"/><stop offset="0.550" stop-color="#fff" stop-opacity="0.348"/><stop offset="0.600" stop-color="#fff" stop-opacity="0.440"/><stop offset="0.650" stop-color="#fff" stop-opacity="0.535"/><stop offset="0.700" stop-color="#fff" stop-opacity="0.630"/><stop offset="0.750" stop-color="#fff" stop-opacity="0.720"/><stop offset="0.800" stop-color="#fff" stop-opacity="0.803"/><stop offset="0.850" stop-color="#fff" stop-opacity="0.876"/><stop offset="0.900" stop-color="#fff" stop-opacity="0.935"/><stop offset="0.950" stop-color="#fff" stop-opacity="0.977"/><stop offset="1.000" stop-color="#fff" stop-opacity="0.998"/></linearGradient><linearGradient id="fg15" gradientUnits="userSpaceOnUse" x1="0" y1="88" x2="0" y2="208"><stop offset="0.000" stop-color="#fff" stop-opacity="0.000"/><stop offset="0.050" stop-color="#fff" stop-opacity="0.000"/><stop offset="0.100" stop-color="#fff" stop-opacity="0.000"/><stop offset="0.150" stop-color="#fff" stop-opacity="0.000"/><stop offset="0.200" stop-color="#fff" stop-opacity="0.000"/><stop offset="0.250" stop-color="#fff" stop-opacity="0.000"/><stop offset="0.300" stop-color="#fff" stop-opacity="0.011"/><stop offset="0.350" stop-color="#fff" stop-opacity="0.041"/><stop offset="0.400" stop-color="#fff" stop-opacity="0.086"/><stop offset="0.450" stop-color="#fff" stop-opacity="0.146"/><stop offset="0.500" stop-color="#fff" stop-opacity="0.216"/><stop offset="0.550" stop-color="#fff" stop-opacity="0.296"/><stop offset="0.600" stop-color="#fff" stop-opacity="0.381"/><stop offset="0.650" stop-color="#fff" stop-opacity="0.471"/><stop offset="0.700" stop-color="#fff" stop-opacity="0.562"/><stop offset="0.750" stop-color="#fff" stop-opacity="0.651"/><stop offset="0.800" stop-color="#fff" stop-opacity="0.736"/><stop offset="0.850" stop-color="#fff" stop-opacity="0.814"/><stop offset="0.900" stop-color="#fff" stop-opacity="0.882"/><stop offset="0.950" stop-color="#fff" stop-opacity="0.937"/><stop offset="1.000" stop-color="#fff" stop-opacity="0.977"/></linearGradient><mask id="gm" maskUnits="userSpaceOnUse" x="0" y="0" width="749" height="639"><rect x="-0.30" y="0" width="47.41" height="639" fill="url(#fg0)"/><rect x="46.51" y="0" width="47.41" height="639" fill="url(#fg1)"/><rect x="93.33" y="0" width="47.41" height="639" fill="url(#fg2)"/><rect x="140.14" y="0" width="47.41" height="639" fill="url(#fg3)"/><rect x="186.95" y="0" width="47.41" height="639" fill="url(#fg4)"/><rect x="233.76" y="0" width="47.41" height="639" fill="url(#fg5)"/><rect x="280.57" y="0" width="47.41" height="639" fill="url(#fg6)"/><rect x="327.39" y="0" width="47.41" height="639" fill="url(#fg7)"/><rect x="374.20" y="0" width="47.41" height="639" fill="url(#fg8)"/><rect x="421.01" y="0" width="47.41" height="639" fill="url(#fg9)"/><rect x="467.82" y="0" width="47.41" height="639" fill="url(#fg10)"/><rect x="514.64" y="0" width="47.41" height="639" fill="url(#fg11)"/><rect x="561.45" y="0" width="47.41" height="639" fill="url(#fg12)"/><rect x="608.26" y="0" width="47.41" height="639" fill="url(#fg13)"/><rect x="655.08" y="0" width="47.41" height="639" fill="url(#fg14)"/><rect x="701.89" y="0" width="47.41" height="639" fill="url(#fg15)"/></mask></defs>
<g shape-rendering="crispEdges"><rect x="0" y="0" width="15" height="639" fill="url(#sk0)"/><rect x="15" y="0" width="15" height="639" fill="url(#sk1)"/><rect x="30" y="0" width="15" height="639" fill="url(#sk2)"/><rect x="45" y="0" width="15" height="639" fill="url(#sk3)"/><rect x="60" y="0" width="15" height="639" fill="url(#sk4)"/><rect x="75" y="0" width="15" height="639" fill="url(#sk5)"/><rect x="90" y="0" width="15" height="639" fill="url(#sk6)"/><rect x="105" y="0" width="15" height="639" fill="url(#sk7)"/><rect x="120" y="0" width="15" height="639" fill="url(#sk8)"/><rect x="135" y="0" width="15" height="639" fill="url(#sk9)"/><rect x="150" y="0" width="15" height="639" fill="url(#sk10)"/><rect x="165" y="0" width="15" height="639" fill="url(#sk11)"/><rect x="180" y="0" width="15" height="639" fill="url(#sk12)"/><rect x="195" y="0" width="15" height="639" fill="url(#sk13)"/><rect x="210" y="0" width="15" height="639" fill="url(#sk14)"/><rect x="225" y="0" width="15" height="639" fill="url(#sk15)"/><rect x="240" y="0" width="15" height="639" fill="url(#sk16)"/><rect x="255" y="0" width="15" height="639" fill="url(#sk17)"/><rect x="270" y="0" width="15" height="639" fill="url(#sk18)"/><rect x="285" y="0" width="15" height="639" fill="url(#sk19)"/><rect x="300" y="0" width="15" height="639" fill="url(#sk20)"/><rect x="315" y="0" width="15" height="639" fill="url(#sk21)"/><rect x="330" y="0" width="15" height="639" fill="url(#sk22)"/><rect x="345" y="0" width="15" height="639" fill="url(#sk23)"/><rect x="360" y="0" width="14" height="639" fill="url(#sk24)"/><rect x="374" y="0" width="15" height="639" fill="url(#sk25)"/><rect x="389" y="0" width="15" height="639" fill="url(#sk26)"/><rect x="404" y="0" width="15" height="639" fill="url(#sk27)"/><rect x="419" y="0" width="15" height="639" fill="url(#sk28)"/><rect x="434" y="0" width="15" height="639" fill="url(#sk29)"/><rect x="449" y="0" width="15" height="639" fill="url(#sk30)"/><rect x="464" y="0" width="15" height="639" fill="url(#sk31)"/><rect x="479" y="0" width="15" height="639" fill="url(#sk32)"/><rect x="494" y="0" width="15" height="639" fill="url(#sk33)"/><rect x="509" y="0" width="15" height="639" fill="url(#sk34)"/><rect x="524" y="0" width="15" height="639" fill="url(#sk35)"/><rect x="539" y="0" width="15" height="639" fill="url(#sk36)"/><rect x="554" y="0" width="15" height="639" fill="url(#sk37)"/><rect x="569" y="0" width="15" height="639" fill="url(#sk38)"/><rect x="584" y="0" width="15" height="639" fill="url(#sk39)"/><rect x="599" y="0" width="15" height="639" fill="url(#sk40)"/><rect x="614" y="0" width="15" height="639" fill="url(#sk41)"/><rect x="629" y="0" width="15" height="639" fill="url(#sk42)"/><rect x="644" y="0" width="15" height="639" fill="url(#sk43)"/><rect x="659" y="0" width="15" height="639" fill="url(#sk44)"/><rect x="674" y="0" width="15" height="639" fill="url(#sk45)"/><rect x="689" y="0" width="15" height="639" fill="url(#sk46)"/><rect x="704" y="0" width="15" height="639" fill="url(#sk47)"/><rect x="719" y="0" width="15" height="639" fill="url(#sk48)"/><rect x="734" y="0" width="15" height="639" fill="url(#sk49)"/></g>
<g mask="url(#gm)" fill="none" stroke-width="1.15">
<path stroke="#a09c98" stroke-opacity="0.47" d="M522.9 99.0L751.0 105.0M471.4 98.4L751.0 105.9M28.3 103.6L-2.0 105.2M433.3 98.1L751.0 106.8M65.7 102.5L-2.0 106.2M401.7 97.9L751.0 107.8M126.5 101.0L-2.0 108.4M348.7 97.9L751.0 110.0M152.3 100.4L-2.0 109.6M325.2 98.0L751.0 111.2M175.9 99.9L-2.0 110.8M303.0 98.2L751.0 112.4M197.7 99.5L-2.0 112.2M281.9 98.4L751.0 113.7M218.2 99.2L-2.0 113.6M261.4 98.6L751.0 115.1M237.5 98.9L-2.0 115.2M241.5 98.8L751.0 116.6M255.8 98.6L-2.0 116.8M222.1 99.1L751.0 118.2M290.2 98.3L-2.0 120.5M183.8 99.8L751.0 121.8M306.4 98.1L-2.0 122.6M164.8 100.1L751.0 123.7M322.2 98.0L-2.0 124.9M145.9 100.5L751.0 125.9M337.5 98.0L-2.0 127.3M126.9 101.0L751.0 128.2M352.5 97.9L-2.0 130.0M107.7 101.4L751.0 130.7M367.2 97.9L-2.0 133.0M88.4 101.9L751.0 133.5M381.6 97.9L-2.0 136.3M68.7 102.5L751.0 136.5M409.9 98.0L-2.0 143.9M28.4 103.6L751.0 143.5M423.9 98.0L-2.0 148.5M7.6 104.3L751.0 147.5M437.7 98.1L-2.0 153.6M-2.0 105.7L751.0 152.1M451.5 98.2L-2.0 159.5M-2.0 107.9L751.0 157.2M465.3 98.3L-2.0 166.3M-2.0 110.4L751.0 163.0M479.1 98.5L-2.0 174.2M-2.0 113.3L751.0 169.6M492.9 98.6L-2.0 183.5M-2.0 116.6L751.0 177.3M520.7 99.0L-2.0 208.1M-2.0 125.0L751.0 196.7M534.8 99.2L-2.0 225.0M-2.0 130.5L751.0 209.4M549.0 99.5L-2.0 246.5M-2.0 137.2L751.0 224.8M563.4 99.7L-2.0 275.0M-2.0 145.6L751.0 244.2M578.0 100.0L-2.0 314.5M-2.0 156.3L751.0 269.0M592.9 100.3L-2.0 372.9M-2.0 170.7L751.0 302.1M608.0 100.6L-2.0 467.9M-2.0 190.8L751.0 348.5M639.3 101.4L305.8 641.0M-2.0 271.1L751.0 534.1M655.5 101.8L603.4 641.0M-2.0 371.6L512.4 641.0M672.1 102.2L751.0 287.8M689.3 102.7L751.0 167.9M707.0 103.2L751.0 133.2M725.3 103.8L751.0 116.7M744.2 104.4L751.0 107.0"/>
<path stroke="#dddbd9" stroke-opacity="0.6" stroke-width="1.4" d="M98.0 101.7L-2.0 107.3M373.9 97.9L751.0 108.9M273.3 98.4L-2.0 118.6M202.8 99.4L751.0 119.9M395.8 97.9L-2.0 139.9M48.8 103.0L751.0 139.8M506.7 98.8L-2.0 194.6M-2.0 120.4L751.0 186.2"/>
</g>
<polygon points="-4.26,221.36 184.98,270.97 374.22,320.58 563.46,370.19 752.70,419.80 753.30,417.47 564.04,367.95 374.78,318.42 185.52,268.90 -3.74,219.38" fill="#fa3a64"/>
<polygon points="657.95,70.15 646.97,79.56 635.75,88.70 624.87,98.25 614.00,107.79 603.13,117.33 592.26,126.87 581.38,136.41 570.51,145.96 559.64,155.50 548.76,165.04 537.89,174.58 527.02,184.12 516.14,193.67 505.27,203.21 494.40,212.75 483.53,222.29 472.65,231.83 461.78,241.37 450.91,250.92 440.03,260.46 429.16,270.00 418.29,279.54 407.41,289.08 396.54,298.63 385.67,308.17 374.80,317.71 363.92,327.25 353.05,336.79 342.18,346.34 331.30,355.88 320.43,365.42 309.56,374.96 298.69,384.50 287.81,394.05 276.94,403.59 266.07,413.13 255.19,422.67 244.32,432.21 233.45,441.76 222.57,451.30 211.70,460.84 200.83,470.38 189.96,479.92 179.08,489.46 168.21,499.01 157.34,508.55 146.46,518.09 135.59,527.63 124.72,537.17 113.84,546.72 102.97,556.26 92.10,565.80 81.23,575.34 70.35,584.88 59.48,594.43 48.61,603.97 37.73,613.51 26.86,623.05 15.99,632.59 5.12,642.14 6.63,643.86 17.51,634.32 28.38,624.78 39.25,615.24 50.12,605.70 61.00,596.15 71.87,586.61 82.74,577.07 93.62,567.53 104.49,557.99 115.36,548.45 126.23,538.90 137.11,529.36 147.98,519.82 158.85,510.28 169.73,500.74 180.60,491.19 191.47,481.65 202.35,472.11 213.22,462.57 224.09,453.03 234.96,443.48 245.84,433.94 256.71,424.40 267.58,414.86 278.46,405.32 289.33,395.77 300.20,386.23 311.08,376.69 321.95,367.15 332.82,357.61 343.69,348.06 354.57,338.52 365.44,328.98 376.31,319.44 387.19,309.90 398.06,300.36 408.93,290.81 419.80,281.27 430.68,271.73 441.55,262.19 452.42,252.65 463.30,243.10 474.17,233.56 485.04,224.02 495.92,214.48 506.79,204.94 517.66,195.39 528.53,185.85 539.41,176.31 550.28,166.77 561.15,157.23 572.03,147.68 582.90,138.14 593.77,128.60 604.65,119.06 615.52,109.52 626.39,99.97 637.26,90.43 647.78,80.49 658.55,70.82" fill="#2ba2fd"/>
<line x1="374.55" y1="0" x2="374.55" y2="639" stroke="#a6e000" stroke-width="1.65"/>
</svg>
<div class="a" style="left:10px;top:10px;width:115px;height:33px;border-radius:5px;background:rgba(72,72,76,.6)"></div>
<div class="vpb"></div>
</div>
<svg class="ic" style="left:299.0px;top:135.3px;width:16px;height:16px;color:#dedede;" viewBox="0 0 16 16" ><circle cx="8" cy="2" r="2.05" fill="currentColor"/><circle cx="8" cy="8" r="2.05" fill="currentColor"/><circle cx="8" cy="14" r="2.05" fill="currentColor"/></svg><span class="t " style="letter-spacing:-0.03px;left:319px;top:133.2px;color:#e6e6e6">Perspective</span>
<svg class="giz" style="left:940px;top:127px" width="80" height="80" viewBox="0 0 80 80">
<circle cx="13.5" cy="32.900" r="8" fill="#a93049" stroke="#e4506e" stroke-opacity=".8" stroke-width="1.100"/>
<circle cx="54.400" cy="27.200" r="8" fill="#4a80ba" stroke="#7db2e8" stroke-opacity=".8" stroke-width="1.100"/>
<circle cx="40.100" cy="66.200" r="8" fill="#699714" stroke="#8fcf2a" stroke-opacity=".8" stroke-width="1.100"/>
<line x1="40.100" y1="39.800" x2="40.100" y2="14" stroke="#84d600" stroke-width="3"/>
<line x1="40.100" y1="39.800" x2="66.400" y2="46.800" stroke="#f0365a" stroke-width="3"/>
<line x1="40.100" y1="39.800" x2="25.600" y2="52.500" stroke="#2d8df2" stroke-width="3"/>
<circle cx="40.100" cy="13.5" r="8.900" fill="#84d600"/>
<circle cx="66.400" cy="46.800" r="8.500" fill="#f0365a"/>
<circle cx="25.600" cy="52.500" r="8.600" fill="#2d8df2"/>
<g font-family="Liberation Sans, sans-serif" font-size="12.500" fill="#0a0a0a" text-anchor="middle">
<text x="40.100" y="18">Y</text><text x="66.400" y="51.300">X</text><text x="25.600" y="57">Z</text></g>
</svg>

<!-- bottom panel -->
<div class="panel" style="left:281px;top:759px;width:749px;height:40px;border-radius:4px"></div>
<span class="t " style="letter-spacing:-0.01px;left:293px;top:768.7px;">Output</span><span class="t " style="letter-spacing:0.01px;left:358px;top:768.7px;">Debugger</span><span class="t " style="letter-spacing:-0.07px;left:444px;top:768.7px;">Audio</span><span class="t " style="letter-spacing:-0.08px;left:503px;top:768.7px;">Animation</span><span class="t " style="letter-spacing:-0.17px;left:590px;top:768.7px;">Shader Editor</span>
<div class="sep" style="left:933px;top:767px;height:24px"></div>
<svg class="ic" style="left:949.0px;top:771.5px;width:15px;height:15px;color:#4c4c4c;" viewBox="0 0 16 16" ><g transform="rotate(14 8 8)"><path fill="currentColor" d="M8 1a1.200 1.200 0 0 0-1.200 1.300A4.600 4.600 0 0 0 3.500 6.800v3.400L1.800 12.500h12.400l-1.700-2.300V6.800A4.600 4.600 0 0 0 9.200 2.300 1.200 1.200 0 0 0 8 1zM6.300 13.300a1.700 1.700 0 0 0 3.400 0z"/></g></svg><span class="t " style="letter-spacing:0.09px;left:974.6px;top:768.6px;color:#9a9a9a">4.6.rc1</span>

<!-- Inspector dock -->
<div class="tab" style="left:1033px;top:44px;width:97px;height:33px"></div>
<div class="panel" style="left:1033px;top:76px;width:283px;height:723px;border-radius:0 0 3px 3px"></div>
<span class="t hl" style="letter-spacing:0.37px;left:1049px;top:49.6px;">Inspector</span><span class="t dim" style="letter-spacing:-0.17px;left:1146px;top:49.6px;">Signals</span><span class="t dim" style="letter-spacing:-0.20px;left:1227px;top:49.6px;">Groups</span>
<svg class="ic" style="left:1299.0px;top:52.0px;width:16px;height:16px;color:#787878;" viewBox="0 0 16 16" ><circle cx="8" cy="2" r="2.05" fill="currentColor"/><circle cx="8" cy="8" r="2.05" fill="currentColor"/><circle cx="8" cy="14" r="2.05" fill="currentColor"/></svg>
<svg class="ic" style="left:1044.7px;top:86.0px;width:16px;height:16px;color:#cfcfcf;" viewBox="0 0 16 16" ><path fill="currentColor" d="M2.500 1v14h6V9.800h5.300V6H9.500V1z"/><path fill="currentColor" opacity=".75" d="M10.300 1v4.200h4.200z"/><path fill="#45e054" d="M10.700 8.900h2.100v2h2.100V13h-2.100v2.100h-2.100V13H8.600v-2.100h2.100z"/></svg><svg class="ic" style="left:1077.0px;top:86.3px;width:16px;height:16px;color:#cfcfcf;" viewBox="0 0 16 16" ><path fill="none" stroke="currentColor" stroke-width="1.100" stroke-linejoin="round" d="M1.700 13V3.500a1 1 0 0 1 1-1H6l1.500 1.800h5a1 1 0 0 1 1 1v1.400"/><path fill="currentColor" d="M5.200 6.900h10.300l-1.900 7.200H2.800z"/></svg><svg class="ic" style="left:1109.0px;top:86.0px;width:16px;height:16px;color:#6a6a6a;" viewBox="0 0 16 16" ><path fill="currentColor" fill-rule="evenodd" d="M2.200 1a1.200 1.200 0 0 0-1.200 1.200v11.600A1.200 1.200 0 0 0 2.200 15h11.600a1.200 1.200 0 0 0 1.200-1.200V4.200L11.800 1zM4.600 1h1.800v3.800h3.200V1h1.200v4.900H4.600zM8 8.900a2 2 0 1 1 0 4 2 2 0 0 1 0-4z"/></svg><svg class="ic" style="left:1141.0px;top:86.0px;width:16px;height:16px;color:#cfcfcf;" viewBox="0 0 16 16" ><circle cx="8" cy="2" r="2.05" fill="currentColor"/><circle cx="8" cy="8" r="2.05" fill="currentColor"/><circle cx="8" cy="14" r="2.05" fill="currentColor"/></svg>
<svg class="ic" style="left:1236.0px;top:86.0px;width:16px;height:16px;color:#7a7a7a;" viewBox="0 0 16 16" ><path fill="none" stroke="currentColor" stroke-width="1.700" d="M10.500 1.500L6 8l4.500 6.500"/></svg><svg class="ic" style="left:1260.0px;top:86.0px;width:16px;height:16px;color:#7a7a7a;" viewBox="0 0 16 16" ><path fill="none" stroke="currentColor" stroke-width="1.700" d="M5.500 1.500L10 8l-4.500 6.500"/></svg><svg class="ic" style="left:1288.0px;top:86.0px;width:16px;height:16px;color:#7a7a7a;" viewBox="0 0 16 16" ><path fill="none" stroke="currentColor" stroke-width="1.700" d="M3.800 5.200A5.300 5.300 0 1 1 8.400 13.300"/><path fill="currentColor" d="M1 5.200h5.400L3.700 8.900z"/><path fill="none" stroke="currentColor" stroke-width="1.600" d="M8.400 4.800v3.400h2.800"/></svg>
<div class="btn" style="left:1039px;top:110px;width:239px;height:33px;background:#3a3a3a"></div>
<svg class="ic" style="left:1287.5px;top:118.5px;width:16px;height:16px;color:#8a8a8a;" viewBox="0 0 16 16" ><circle cx="9.800" cy="3.800" r="2.900" fill="none" stroke="currentColor" stroke-width="1.700"/><path fill="none" stroke="currentColor" stroke-width="1.700" d="M7.800 5.800L4.900 8.700"/><text x="8.100" y="15" font-size="7.400" font-weight="bold" text-anchor="middle" font-family="Liberation Sans, sans-serif" letter-spacing="-.150" stroke="currentColor" stroke-width=".35" fill="currentColor">DOC</text></svg>
<div class="inp" style="left:1039px;top:147px;width:239px;height:29px"></div>
<span class="t ph" style="letter-spacing:-0.05px;left:1047px;top:151px;">Filter Properties</span><svg class="ic" style="left:1253.5px;top:153.0px;width:16px;height:16px;color:#9c9c9c;" viewBox="0 0 16 16" ><circle cx="5.300" cy="6.100" r="3.600" fill="none" stroke="currentColor" stroke-width="1.900"/><path fill="none" stroke="currentColor" stroke-width="1.900" stroke-linecap="round" d="M8.300 9l5.200 4.500"/></svg><svg class="ic" style="left:1288.0px;top:153.0px;width:16px;height:16px;color:#8f8f8f;" viewBox="0 0 16 16" ><path fill="currentColor" d="M4.300 1L2.900 3.300h1v5.100H2v3.800a2.600 2.600 0 0 0 5.200 0V8.400H5.300V3.300h1zM9.300 1v3.600a2.400 2.400 0 0 0 1.700 2.300V15h1.800V6.900a2.400 2.400 0 0 0 1.700-2.300V1h-1.700v3.200h-1.800V1z"/></svg>

</div></body></html>
